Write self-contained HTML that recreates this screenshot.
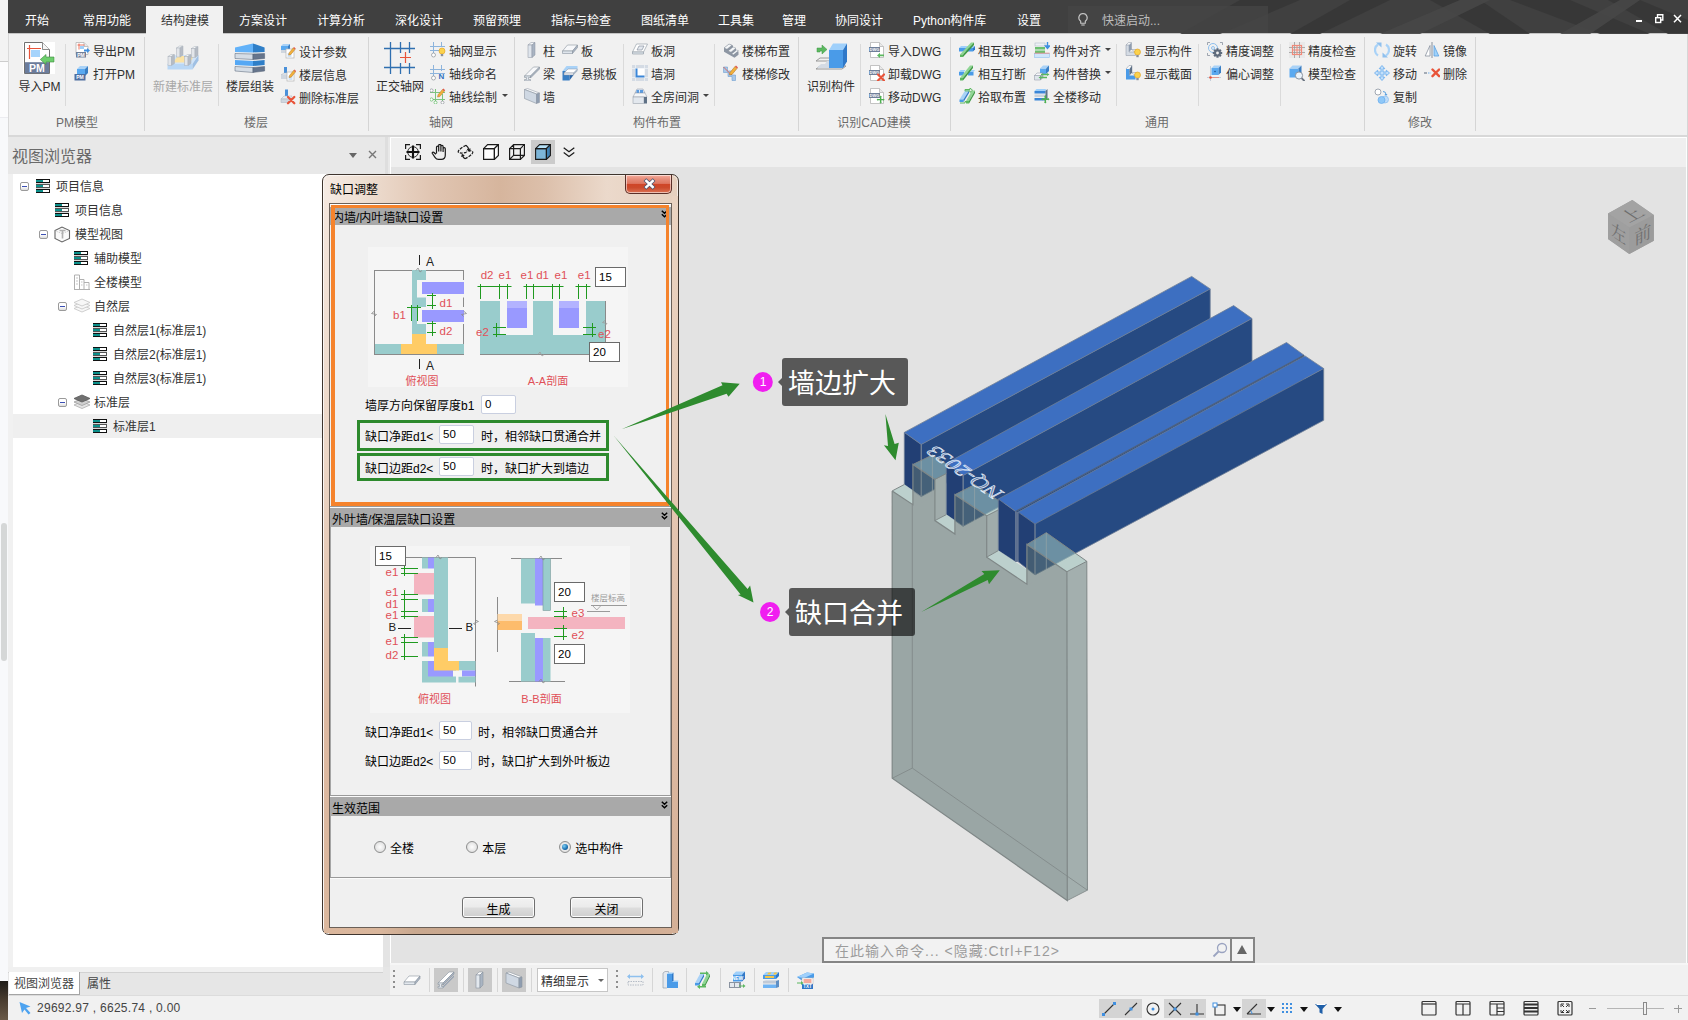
<!DOCTYPE html>
<html lang="zh-CN"><head><meta charset="utf-8"><title>缺口调整</title>
<style>
html,body{margin:0;padding:0}
body{width:1688px;height:1020px;overflow:hidden;position:relative;background:#f1f1f1;font:12px/16px "Liberation Sans","Noto Sans CJK SC",sans-serif;color:#2e2e2e}
div,span,svg{position:absolute;box-sizing:border-box}
.t{white-space:nowrap;height:16px;line-height:16px;margin-top:2px}
.tab{color:#fff;top:11px;font-size:12px}
.rl{color:#6a6a6a;top:113px;text-align:center}
.vs{width:1px;background:#d5d5d5}
.dd{width:0;height:0;border:3px solid transparent;border-top:3px solid #444;border-bottom:none}
.tr{height:24px;line-height:24px;white-space:nowrap;color:#333;margin-top:1px}
.ex{width:9px;height:9px;border:1px solid #9a9a9a;background:linear-gradient(#fff,#fff 50%,#dcdcdc);border-radius:2px}
.ex:after{content:"";position:absolute;left:1px;top:3px;width:5px;height:1px;background:#3c50b4}
.dt{font:12px/14px "Liberation Sans","Noto Sans CJK SC",sans-serif;color:#000;white-space:nowrap;height:14px}
.in{background:#fff;border:1px solid #c9cfe0;border-radius:2px;font:11.5px/17px "Liberation Sans","Noto Sans CJK SC",sans-serif;color:#000;padding-left:3px}
.sh{left:330px;width:341px;height:18px;overflow:hidden;background:#a9a9a9;font:12px/18px "Liberation Sans","Noto Sans CJK SC",sans-serif;color:#000;padding-left:2px;white-space:nowrap}
.btn{height:21px;border:1px solid #707070;border-radius:3px;background:linear-gradient(#f2f2f2 0%,#ebebeb 48%,#dddddd 52%,#cfcfcf 100%);padding-top:3px;font:12px/19px "Liberation Sans","Noto Sans CJK SC",sans-serif;color:#000;text-align:center;box-shadow:inset 0 0 0 1px #fcfcfc}
.rad{width:12px;height:12px;border-radius:50%;border:1px solid #8e8f8f;background:radial-gradient(circle at 50% 50%,#fdfdfd 0%,#e6e6e6 60%,#c9c9c9 100%)}
</style></head><body>
<div style="left:0;top:0;width:8px;height:1020px;background:#f8f9fb"></div><div style="left:0;top:0;width:8px;height:62px;background:#f3f3f3;border-bottom:1px solid #cdcdcd"></div><div style="left:0;top:62px;width:8px;height:56px;background:#fcfcfd;border-bottom:1px solid #ececf0"></div><div style="left:1px;top:523px;width:6px;height:138px;background:#d5d7d7;border-radius:3px"></div><div style="left:0;top:981px;width:8px;height:39px;background:linear-gradient(#1f1c19,#4a3d30 50%,#6a5a48)"></div><div style="left:8px;top:0;width:1680px;height:34px;background:#404040;border-bottom:1px solid #c4c4c4"></div><svg style="left:1180px;top:0" width="508" height="34" viewBox="0 0 508 34"><path d="M60 0L0 34H40L120 0zM170 0l-60 34h30l70-34zM250 0l60 34h40l-50-34zM330 0l90 34h50l-80-34zM460 0l48 20v14l-20 0-60-34z" fill="#363636" opacity=".9"/><path d="M200 34l80-34h30l-70 34zM380 34l60-34h20l-50 34z" fill="#474747" opacity=".9"/></svg><div style="left:1068px;top:6px;width:200px;height:27px;background:#454545;opacity:.8"></div><div style="left:146px;top:6px;width:77px;height:29px;background:#f1f1f1"></div><div class="t tab" style="left:25px;top:11px;">开始</div><div class="t tab" style="left:83px;top:11px;">常用功能</div><div class="t tab" style="left:161px;top:11px;color:#333">结构建模</div><div class="t tab" style="left:239px;top:11px;">方案设计</div><div class="t tab" style="left:317px;top:11px;">计算分析</div><div class="t tab" style="left:395px;top:11px;">深化设计</div><div class="t tab" style="left:473px;top:11px;">预留预埋</div><div class="t tab" style="left:551px;top:11px;">指标与检查</div><div class="t tab" style="left:641px;top:11px;">图纸清单</div><div class="t tab" style="left:718px;top:11px;">工具集</div><div class="t tab" style="left:782px;top:11px;">管理</div><div class="t tab" style="left:835px;top:11px;">协同设计</div><div class="t tab" style="left:913px;top:11px;">Python构件库</div><div class="t tab" style="left:1017px;top:11px;">设置</div><svg style="left:1076px;top:12px" width="14" height="16" viewBox="0 0 14 16"><path d="M7 1.500a4.200 4.200 0 0 1 2.300 7.700v2h-4.600v-2a4.200 4.200 0 0 1 2.300-7.700z" fill="none" stroke="#c8c8c8" stroke-width="1.100"/><path d="M5.300 13h3.400" stroke="#c8c8c8" stroke-width="1.100"/></svg><div class="t" style="left:1102px;top:11px;color:#bdbdbd">快速启动...</div><div style="left:1636px;top:19.500px;width:6px;height:2.500px;background:#fff"></div><svg style="left:1654px;top:13px" width="10" height="11" viewBox="0 0 10 11"><path d="M3.500 4v-2.300h5.300v5.300h-2.300" fill="none" stroke="#fff" stroke-width="1.400"/><rect x="1.700" y="4.700" width="5" height="4.800" fill="none" stroke="#fff" stroke-width="1.400"/></svg><svg style="left:1673px;top:14px" width="9" height="9" viewBox="0 0 9 9"><path d="M1 1l7 7.200M8 1l-7 7.200" stroke="#fff" stroke-width="1.500"/></svg><div style="left:8px;top:34px;width:1680px;height:101px;background:#f1f1f1"></div><div style="left:8px;top:135px;width:1680px;height:2px;background:#d8d8d8"></div><div style="left:8px;top:137px;width:1680px;height:1px;background:#f6f6f6"></div><div style="left:8px;top:34px;width:1px;height:101px;background:#d9d9d9"></div><div class="vs" style="left:144px;top:37px;height:94px"></div><div class="vs" style="left:368px;top:37px;height:94px"></div><div class="vs" style="left:514px;top:37px;height:94px"></div><div class="vs" style="left:798px;top:37px;height:94px"></div><div class="vs" style="left:950px;top:37px;height:94px"></div><div class="vs" style="left:1364px;top:37px;height:94px"></div><div class="vs" style="left:1475px;top:37px;height:94px"></div><div class="vs" style="left:65px;top:44px;height:62px;background:#dadada"></div><div class="vs" style="left:218px;top:44px;height:62px;background:#dadada"></div><div class="vs" style="left:623px;top:44px;height:62px;background:#dadada"></div><div class="vs" style="left:714px;top:44px;height:62px;background:#dadada"></div><div class="vs" style="left:860px;top:44px;height:62px;background:#dadada"></div><div class="vs" style="left:1116px;top:44px;height:62px;background:#dadada"></div><div class="vs" style="left:1198px;top:44px;height:62px;background:#dadada"></div><div class="vs" style="left:1280px;top:44px;height:62px;background:#dadada"></div><div class="t rl" style="left:27px;width:100px">PM模型</div><div class="t rl" style="left:206px;width:100px">楼层</div><div class="t rl" style="left:391px;width:100px">轴网</div><div class="t rl" style="left:607px;width:100px">构件布置</div><div class="t rl" style="left:824px;width:100px">识别CAD建模</div><div class="t rl" style="left:1107px;width:100px">通用</div><div class="t rl" style="left:1370px;width:100px">修改</div><svg style="left:23px;top:42px" width="32" height="32" viewBox="0 0 32 32"><rect x="0" y="0" width="32" height="32" fill="#fff"/><path d="M1.500 .5h18l7 7v24h-25z" fill="#fff" stroke="#707070" stroke-width="1"/><path d="M19.500 .5v7h7" fill="#f6f6f6" stroke="#8a8a8a" stroke-width="1"/><path d="M4 6.500h14M6.500 3v14" stroke="#e8543a" stroke-width="1.200"/><rect x="8" y="8" width="9" height="7" fill="#a6d4fc"/><rect x="2" y="20.200" width="24" height="11" fill="#6b7c9b"/><text x="13.800" y="29.500" font-size="10.500" font-weight="bold" font-family="Liberation Sans,sans-serif" fill="#fff" text-anchor="middle">PM</text><path d="M31 15h-8v-2.500l-5.700 5 5.700 5v-2.500h8z" fill="#6dce6d" stroke="#3f8a3f" stroke-width=".6"/></svg><div class="t" style="left:-0.5px;width:80px;text-align:center;top:77px;">导入PM</div><svg style="left:167px;top:44px" width="32" height="32" viewBox="0 0 32 32"><path d="M0.500 20l8-9h23l-6 9z" fill="#cfe3f8"/><path d="M6 18.500l5-6.500h16l-4 6.500z" fill="#fbe3a5"/><path d="M9.5 4l3-2h3l-3 2z" fill="#f4f6f8" stroke="#a9b0ba" stroke-width=".5"/><rect x="9.5" y="4" width="3.500" height="9" fill="#e3e6ea" stroke="#a9b0ba" stroke-width=".5"/><path d="M13.0 4l3-2v9l-3 2z" fill="#b5bbc4" stroke="#a9b0ba" stroke-width=".5"/><path d="M24.5 4.5l3-2h3l-3 2z" fill="#f4f6f8" stroke="#a9b0ba" stroke-width=".5"/><rect x="24.5" y="4.5" width="3.500" height="9" fill="#e3e6ea" stroke="#a9b0ba" stroke-width=".5"/><path d="M28.0 4.5l3-2v9l-3 2z" fill="#b5bbc4" stroke="#a9b0ba" stroke-width=".5"/><path d="M0.500 20h25v5.500h-25z" fill="#b9d7f5"/><path d="M25.500 20l6-9v5.500l-6 9z" fill="#9fc0e4"/><path d="M1 12.5l3-2h3l-3 2z" fill="#f4f6f8" stroke="#a9b0ba" stroke-width=".5"/><rect x="1" y="12.5" width="3.500" height="9" fill="#e3e6ea" stroke="#a9b0ba" stroke-width=".5"/><path d="M4.5 12.5l3-2v9l-3 2z" fill="#b5bbc4" stroke="#a9b0ba" stroke-width=".5"/><path d="M17.5 12.5l3-2h3l-3 2z" fill="#f4f6f8" stroke="#a9b0ba" stroke-width=".5"/><rect x="17.5" y="12.5" width="3.500" height="9" fill="#e3e6ea" stroke="#a9b0ba" stroke-width=".5"/><path d="M21.0 12.5l3-2v9l-3 2z" fill="#b5bbc4" stroke="#a9b0ba" stroke-width=".5"/></svg><div class="t" style="left:143px;width:80px;text-align:center;top:77px;color:#a8a8a8">新建标准层</div><svg style="left:234px;top:43px" width="32" height="32" viewBox="0 0 32 32"><path d="M1 4.500L19 .5V9.500L1 9z" fill="#62b2f9"/><path d="M19 .5L30.600 4.500V9L19 9.500z" fill="#2f7fc8"/><path d="M1 10.500L19 11V16.500L1 15.500z" fill="#d5dde6" stroke="#4f5d70" stroke-width=".5"/><path d="M19 11L30.600 10.500V15.500L19 16.500z" fill="#66758c" stroke="#4f5d70" stroke-width=".5"/><path d="M1 17L19 18V23L1 22z" fill="#55a8f5"/><path d="M19 18L30.600 17V22L19 23z" fill="#2f7fc8"/><path d="M1 23.500L19 24.500V29.500L1 28z" fill="#d5dde6" stroke="#4f5d70" stroke-width=".5"/><path d="M19 24.500L30.600 23.500V28L19 29.500z" fill="#66758c" stroke="#4f5d70" stroke-width=".5"/></svg><div class="t" style="left:210px;width:80px;text-align:center;top:77px;">楼层组装</div><svg style="left:383px;top:42px" width="32" height="32" viewBox="0 0 32 32"><path d="M1 6.500h32M1 25.500h32M7.500 0v32M17.500 0v11M17.500 21v11M26.500 0v11M26.500 21v11" stroke="#2f6fb0" stroke-width="1.300"/><path d="M17 15.500h11M22.500 10v11" stroke="#e8543a" stroke-width="1.200"/></svg><div class="t" style="left:360px;width:80px;text-align:center;top:77px;">正交轴网</div><svg style="left:815px;top:43px" width="32" height="32" viewBox="0 0 32 32"><path d="M1 18l4-3h26l-4 3zM1 26l4-3h26l-4 3z" fill="none" stroke="#9a9a9a" stroke-width="1"/><path d="M2 25l4-4h4l2-3h6l-3 7z" fill="#d4dbe4"/><path d="M14 7l4-6.500h14l-4 6.500z" fill="#9fd0fb"/><rect x="14" y="7" width="14" height="18" fill="#4a9be8"/><path d="M28 7l4-6.500v18l-4 6.500z" fill="#2f78c8"/><path d="M2 9v-4h5v-3l5 4.500-5 4.500v-3h-2v1z" fill="#5cb860" stroke="#3f9a45" stroke-width=".5"/></svg><div class="t" style="left:791px;width:80px;text-align:center;top:77px;">识别构件</div><svg style="left:74px;top:42px" width="16" height="16" viewBox="0 0 16 16"><path d="M2 0.5h8l4 4v8h-12z" fill="#fff" stroke="#b5b5b5" stroke-width=".8"/><path d="M10 0.5v4h4" fill="#e9e9e9" stroke="#b5b5b5" stroke-width=".8"/><path d="M3.5 3h7M5 1.5v6" stroke="#e8543a" stroke-width=".8"/><rect x="6" y="4" width="4" height="3" fill="#9fd0fb"/><rect x="2" y="10" width="10" height="5.5" fill="#6f7f99"/><text x="7" y="14.6" font-size="5" font-weight="bold" font-family="Liberation Sans,sans-serif" fill="#fff" text-anchor="middle">PM</text><path d="M10 7.5h3v-1.5l3 2.5-3 2.5v-1.5h-3z" fill="#3f8fe0"/></svg><div class="t" style="left:93px;top:42px;">导出PM</div><svg style="left:74px;top:65px" width="16" height="16" viewBox="0 0 16 16"><path d="M3 4h8v7h-8z" fill="#5aa9f0"/><path d="M3 4l3 -3h8l-3 3z" fill="#a9d2f7"/><path d="M11 4l3 -3v7l-3 3z" fill="#3a7fc4"/><rect x="0.5" y="9" width="11" height="6.5" fill="#4f6f9f"/><text x="6" y="14.4" font-size="5" font-weight="bold" font-family="Liberation Sans,sans-serif" fill="#fff" text-anchor="middle">PM</text></svg><div class="t" style="left:93px;top:65px;">打开PM</div><svg style="left:280px;top:43px" width="16" height="16" viewBox="0 0 16 16"><path d="M1 3h7v5h-7z" fill="#5aa9f0"/><path d="M1 3l2 -2h7l-2 2z" fill="#a9d2f7"/><path d="M8 3l2 -2v5l-2 2z" fill="#3a7fc4"/><rect x="1" y="7" width="8" height="3" fill="#cfd6df"/><rect x="6" y="6" width="8" height="9" fill="#fff" stroke="#b5b5b5" stroke-width=".7"/><path d="M7.5 11h4M7.5 13h4" stroke="#9fc6ee" stroke-width="1"/><g transform="translate(9,4) scale(0.85)"><path d="M0 7 L5 1 L7 3 L2 9 L-0.5 9.5Z" fill="#f2b13c" stroke="#a86a1c" stroke-width=".5"/><path d="M5 1 L6 0 L8 2 L7 3Z" fill="#e0564a"/></g></svg><div class="t" style="left:299px;top:43px;">设计参数</div><svg style="left:280px;top:66px" width="16" height="16" viewBox="0 0 16 16"><rect x="4" y="1" width="3" height="7" fill="#4a90d9"/><path d="M1 9l3-2h7l-3 2z" fill="#e8edf2" stroke="#aab2bd" stroke-width=".5"/><rect x="1" y="9" width="7" height="4" fill="#cfd6df"/><rect x="7" y="6" width="7" height="9" fill="#fff" stroke="#b5b5b5" stroke-width=".7"/><path d="M8.5 11h4M8.5 13h4" stroke="#9fc6ee" stroke-width="1"/><g transform="translate(9.5,3.5) scale(0.85)"><path d="M0 7 L5 1 L7 3 L2 9 L-0.5 9.5Z" fill="#f2b13c" stroke="#a86a1c" stroke-width=".5"/><path d="M5 1 L6 0 L8 2 L7 3Z" fill="#e0564a"/></g></svg><div class="t" style="left:299px;top:66px;">楼层信息</div><svg style="left:280px;top:89px" width="16" height="16" viewBox="0 0 16 16"><rect x="5" y="0.5" width="3" height="7" fill="#4a90d9"/><path d="M1 10l3-3h8l-2 3z" fill="#e8edf2" stroke="#aab2bd" stroke-width=".5"/><rect x="1" y="10" width="9" height="3.5" fill="#cfd6df" stroke="#aab2bd" stroke-width=".5"/><g transform="translate(8,8) scale(1.05)" stroke="#e8543a" stroke-width="2.2" stroke-linecap="round"><path d="M0 0L6 6M6 0L0 6"/></g></svg><div class="t" style="left:299px;top:89px;">删除标准层</div><svg style="left:430px;top:42px" width="16" height="16" viewBox="0 0 16 16"><path d="M0 4.5h15M0 8.5h9M3.5 0v11M11.5 0v5" stroke="#8db4dc" stroke-width="1"/><circle cx="3.5" cy="13" r="2" fill="#fff" stroke="#8a8f98" stroke-width=".7"/><g transform="translate(9,6)"><circle cx="3" cy="3" r="3" fill="#fbd24c" stroke="#e0a020" stroke-width=".6"/><rect x="1.8" y="6" width="2.4" height="2.2" fill="#8a8f98"/></g></svg><div class="t" style="left:449px;top:42px;">轴网显示</div><svg style="left:430px;top:65px" width="16" height="16" viewBox="0 0 16 16"><path d="M0 4.5h15M0 8.5h15M3.5 0v11M11.5 0v6" stroke="#8db4dc" stroke-width="1"/><circle cx="3.5" cy="13" r="2" fill="#fff" stroke="#8a8f98" stroke-width=".7"/><text x="11.5" y="14" font-size="8" font-weight="bold" font-family="Liberation Sans,sans-serif" fill="#2f6fc0" text-anchor="middle">N</text></svg><div class="t" style="left:449px;top:65px;">轴线命名</div><svg style="left:430px;top:88px" width="16" height="16" viewBox="0 0 16 16"><path d="M0 4.5h15M0 11.5h15M5.5 1v13M12.5 6v8" stroke="#7cc47f" stroke-width="1"/><circle cx="1.5" cy="2.5" r="1.6" fill="#fff" stroke="#8a8f98" stroke-width=".7"/><circle cx="1.5" cy="11.5" r="1.6" fill="#fff" stroke="#5cb860" stroke-width=".7"/><circle cx="5.5" cy="14.5" r="1.5" fill="#fff" stroke="#5cb860" stroke-width=".7"/><circle cx="12.5" cy="14.5" r="1.5" fill="#fff" stroke="#8a8f98" stroke-width=".7"/><g transform="translate(8,0.5) scale(0.9)"><path d="M0 7 L5 1 L7 3 L2 9 L-0.5 9.5Z" fill="#f2b13c" stroke="#a86a1c" stroke-width=".5"/><path d="M5 1 L6 0 L8 2 L7 3Z" fill="#e0564a"/></g></svg><div class="t" style="left:449px;top:88px;">轴线绘制</div><svg style="left:524px;top:42px" width="16" height="16" viewBox="0 0 16 16"><path d="M4 3l3-2.5h4l-3 2.5z" fill="#f4f6f8" stroke="#8a93a0" stroke-width=".5"/><rect x="4" y="3" width="4" height="12.5" fill="#dfe5ec" stroke="#8a93a0" stroke-width=".5"/><path d="M8 3l3-2.5v12.5l-3 2.5z" fill="#a9b4c2" stroke="#8a93a0" stroke-width=".5"/></svg><div class="t" style="left:543px;top:42px;">柱</div><svg style="left:524px;top:65px" width="16" height="16" viewBox="0 0 16 16"><path d="M0.5 11l9-9h6l-9 9z" fill="#f7f8fa" stroke="#8a93a0" stroke-width=".6"/><path d="M0.5 11h6v1.5h-2v2h2v1.3h-6v-1.3h2v-2h-2z" fill="#dfe5ec" stroke="#8a93a0" stroke-width=".6"/><path d="M6.5 11l9-9v2l-9 9z" fill="#a9b4c2" stroke="#8a93a0" stroke-width=".6"/></svg><div class="t" style="left:543px;top:65px;">梁</div><svg style="left:524px;top:88px" width="16" height="16" viewBox="0 0 16 16"><path d="M0.5 1.500l3-1l12 4.500l-3 1z" fill="#f4f6f8" stroke="#8a93a0" stroke-width=".5"/><path d="M0.5 1.500l12 4.500v9.500l-12-5z" fill="#cfd8e3" stroke="#8a93a0" stroke-width=".6"/><path d="M12.5 6l3-1v9.500l-3 1z" fill="#8f9db0" stroke="#8a93a0" stroke-width=".5"/></svg><div class="t" style="left:543px;top:88px;">墙</div><svg style="left:562px;top:42px" width="16" height="16" viewBox="0 0 16 16"><path d="M0.5 9l5-6h10l-5 6z" fill="#f7f8fa" stroke="#8a93a0" stroke-width=".6"/><path d="M0.5 9h10v2.5h-10z" fill="#dfe5ec" stroke="#8a93a0" stroke-width=".6"/><path d="M10.5 9l5-6v2.5l-5 6z" fill="#a9b4c2" stroke="#8a93a0" stroke-width=".6"/></svg><div class="t" style="left:581px;top:42px;">板</div><svg style="left:562px;top:65px" width="16" height="16" viewBox="0 0 16 16"><path d="M0.5 6l4-5h11v4l-4 5z" fill="#a9d2f7"/><path d="M0.5 6h7v9.5h-7z" fill="#3a7fc4"/><path d="M7.5 10l4-5v5l-4 5.5z" fill="#2b66a8"/><path d="M2 8l4-4h9.5l-4 4z" fill="#fff" stroke="#8a93a0" stroke-width=".5"/><path d="M2 8h9.500v2h-9.5z" fill="#eef1f5" stroke="#8a93a0" stroke-width=".5"/><path d="M11.5 8l4-4v2l-4 4z" fill="#a9b4c2"/></svg><div class="t" style="left:581px;top:65px;">悬挑板</div><svg style="left:632px;top:42px" width="16" height="16" viewBox="0 0 16 16"><path d="M0.5 10l4-8h11l-4 8z" fill="#fff" stroke="#8a93a0" stroke-width=".6"/><path d="M0.5 10h11v2h-11z" fill="#dfe5ec" stroke="#8a93a0" stroke-width=".6"/><path d="M5 8l2-4h5l-2 4z" fill="#e3e8ee" stroke="#8a93a0" stroke-width=".7"/></svg><div class="t" style="left:651px;top:42px;">板洞</div><svg style="left:632px;top:65px" width="16" height="16" viewBox="0 0 16 16"><rect x="0" y="0" width="16" height="16" fill="#d4dbe4"/><path d="M0 3.500h16M0 12.500h16M3.500 0v16M12.500 0v16" stroke="#eef1f5" stroke-width=".8"/><rect x="3.500" y="3.500" width="9" height="9" fill="#fff"/><path d="M3.500 3.500h2v7h7v2h-9z" fill="#3a86d8"/></svg><div class="t" style="left:651px;top:65px;">墙洞</div><svg style="left:632px;top:88px" width="16" height="16" viewBox="0 0 16 16"><path d="M3 5l2-4h6l2 4z" fill="#dbe8f6" stroke="#8a93a0" stroke-width=".5"/><path d="M4.500 2h2.500v3h-2.500zM8 2h3v5h-3z" fill="#5a9be0"/><path d="M1 9l2-4h10l2 4z" fill="#f4f6f8" stroke="#8a93a0" stroke-width=".5"/><rect x="1" y="9" width="11" height="6.500" fill="#e3e8ee" stroke="#8a93a0" stroke-width=".5"/><path d="M12 9l3 0v6.500h-3z" fill="#5f7186"/></svg><div class="t" style="left:651px;top:88px;">全房间洞</div><svg style="left:723px;top:42px" width="16" height="16" viewBox="0 0 16 16"><path d="M1 6l5-4 4 1.500v2l3 1.200v2l2.500 1v3l-4 3l-10.500-6z" fill="#8d96a3"/><path d="M1 6l5-4l3 1.200l-5 4zM5 9l5-4l3 1.200l-5 4zM8.500 12l5-4l2 .8l-5 4z" fill="#f4f6f8" stroke="#6d7683" stroke-width=".4"/></svg><div class="t" style="left:742px;top:42px;">楼梯布置</div><svg style="left:723px;top:65px" width="16" height="16" viewBox="0 0 16 16"><path d="M0.500 2h4v4h4v4h4v5.500h-3.500v-4h-4v-4h-4.500z" fill="#a9c8ea" stroke="#6f9fd0" stroke-width=".6"/><path d="M0.500 2l8 8" stroke="#e8543a" stroke-width=".8"/><g transform="translate(7,0.5) scale(1)"><path d="M0 7 L5 1 L7 3 L2 9 L-0.5 9.5Z" fill="#f2b13c" stroke="#a86a1c" stroke-width=".5"/><path d="M5 1 L6 0 L8 2 L7 3Z" fill="#e0564a"/></g></svg><div class="t" style="left:742px;top:65px;">楼梯修改</div><svg style="left:869px;top:42px" width="16" height="16" viewBox="0 0 16 16"><path d="M1.5 0.5h9l4 4v11h-13z" fill="#fff" stroke="#b5b5b5" stroke-width=".8"/><path d="M10.5 0.5v4h4" fill="#e9e9e9" stroke="#b5b5b5" stroke-width=".8"/><rect x="0" y="5" width="11" height="5" fill="#6f7f99"/><text x="5.5" y="9" font-size="4" font-family="Liberation Sans,sans-serif" font-weight="bold" fill="#fff" text-anchor="middle">DWG</text><path d="M15 12.500h-4v-1.800l-3 2.800 3 2.500v-1.800h4z" fill="#5cb860"/></svg><div class="t" style="left:888px;top:42px;">导入DWG</div><svg style="left:869px;top:65px" width="16" height="16" viewBox="0 0 16 16"><path d="M1.5 0.5h9l4 4v11h-13z" fill="#fff" stroke="#b5b5b5" stroke-width=".8"/><path d="M10.5 0.5v4h4" fill="#e9e9e9" stroke="#b5b5b5" stroke-width=".8"/><rect x="0" y="5" width="11" height="5" fill="#6f7f99"/><text x="5.5" y="9" font-size="4" font-family="Liberation Sans,sans-serif" font-weight="bold" fill="#fff" text-anchor="middle">DWG</text><g transform="translate(9,9.5) scale(1)" stroke="#e8543a" stroke-width="2.2" stroke-linecap="round"><path d="M0 0L6 6M6 0L0 6"/></g></svg><div class="t" style="left:888px;top:65px;">卸载DWG</div><svg style="left:869px;top:88px" width="16" height="16" viewBox="0 0 16 16"><path d="M1.5 0.5h9l4 4v11h-13z" fill="#fff" stroke="#b5b5b5" stroke-width=".8"/><path d="M10.5 0.5v4h4" fill="#e9e9e9" stroke="#b5b5b5" stroke-width=".8"/><rect x="0" y="5" width="11" height="5" fill="#6f7f99"/><text x="5.5" y="9" font-size="4" font-family="Liberation Sans,sans-serif" font-weight="bold" fill="#fff" text-anchor="middle">DWG</text><g transform="translate(8.5,8.5) scale(0.9)" stroke="#4caf50" stroke-width="1.6" fill="#4caf50"><path d="M3.5 0V7M0 3.5H7"/><path d="M3.5 -1l1.3 1.6h-2.6z M3.5 8l1.3-1.6h-2.6z M-1 3.5l1.6 -1.3v2.6z M8 3.5l-1.6-1.3v2.6z" stroke="none"/></g></svg><div class="t" style="left:888px;top:88px;">移动DWG</div><svg style="left:959px;top:42px" width="16" height="16" viewBox="0 0 16 16"><path d="M0 6l2-2h14l-2 2z" fill="#9fd0fb"/><rect x="0" y="6" width="14" height="3.500" fill="#4a9be8"/><path d="M14 6l2-2v3.500l-2 2z" fill="#2f78c8"/><path d="M1 12.5L12 0.5l3 0L4 12.5z" fill="#8fd694"/><path d="M1 12.5v2.500h3v-2.500z" fill="#5cb860"/><path d="M4 12.5L15 0.5v2.500L4 15.0z" fill="#3f9a45"/></svg><div class="t" style="left:978px;top:42px;">相互裁切</div><svg style="left:959px;top:65px" width="16" height="16" viewBox="0 0 16 16"><path d="M0 7l1.500-2h5l-1.500 2zM9 7l1.500-2h5.500l-1.500 2z" fill="#9fd0fb"/><path d="M0 7h5v3.500h-5zM9 7h5.500v3.500h-5.500z" fill="#4a9be8"/><path d="M1 13L11 0.5l3 0L4 13z" fill="#8fd694"/><path d="M1 13v2.500h3v-2.500z" fill="#5cb860"/><path d="M4 13L14 0.5v2.500L4 15.5z" fill="#3f9a45"/></svg><div class="t" style="left:978px;top:65px;">相互打断</div><svg style="left:959px;top:88px" width="16" height="16" viewBox="0 0 16 16"><path d="M0.5 11.5L6 2.5l4 0L4.5 11.5z" fill="#a9d2f7"/><path d="M0.5 11.5v2.500h4v-2.500z" fill="#4a9be8"/><path d="M4.5 11.5L10 2.5v2.500L4.5 14.0z" fill="#2f78c8"/><path d="M7 13L13 2.5l3 0L10 13z" fill="#8fd694"/><path d="M7 13v2.500h3v-2.500z" fill="#5cb860"/><path d="M10 13L16 2.5v2.500L10 15.5z" fill="#3f9a45"/><path d="M6 1.500h5v-1.500l2.500 2.200-2.500 2.200v-1.500h-5zM1 15h5v-1.500h3" fill="none" stroke="#5cb860" stroke-width="1"/></svg><div class="t" style="left:978px;top:88px;">拾取布置</div><svg style="left:1034px;top:42px" width="16" height="16" viewBox="0 0 16 16"><rect x="1" y="1" width="10" height="3" fill="#eef1f5" stroke="#a9b4c2" stroke-width=".5"/><rect x="1" y="5" width="10" height="2.500" fill="#6cc070"/><rect x="1" y="8.500" width="10" height="2.500" fill="#6cc070"/><path d="M13.500 0v5M11.500 4l2 2.500 2-2.500z" stroke="#3f8fe0" stroke-width="1.400" fill="#3f8fe0"/><rect x="0.500" y="11.500" width="15" height="4" fill="#cfe6fb" stroke="#8fc0ee" stroke-width=".6"/><path d="M0.500 11.200h15" stroke="#e8877a" stroke-width=".8"/></svg><div class="t" style="left:1053px;top:42px;">构件对齐</div><svg style="left:1034px;top:65px" width="16" height="16" viewBox="0 0 16 16"><path d="M6 3.5h6v5.5h-6z" fill="#5aa9f0"/><path d="M6 3.5l3 -3h6l-3 3z" fill="#a9d2f7"/><path d="M12 3.5l3 -3v5.5l-3 3z" fill="#3a7fc4"/><path d="M0.5 10.5h6v4.5h-6z" fill="#dfe5ec" stroke="#8a93a0" stroke-width=".5"/><path d="M0.5 10.5l2.5 -2.5h6l-2.5 2.5z" fill="#f7f8fa" stroke="#8a93a0" stroke-width=".5"/><path d="M6.5 10.5l2.5 -2.5v4.5l-2.5 2.5z" fill="#a9b4c2" stroke="#8a93a0" stroke-width=".5"/><path d="M7 9.500h6M7 12.500h6" stroke="#5cb860" stroke-width="1.500"/><path d="M13 8l2.500 1.500-2.500 1.500zM7 11l-2.500 1.500 2.500 1.500z" fill="#5cb860"/></svg><div class="t" style="left:1053px;top:65px;">构件替换</div><svg style="left:1034px;top:88px" width="16" height="16" viewBox="0 0 16 16"><path d="M0.500 3l2-2h9l2 2z" fill="#9fd0fb"/><rect x="0.500" y="3" width="11" height="2.500" fill="#3a86d8"/><rect x="0.500" y="6.500" width="11" height="2.500" fill="#c9d2dd"/><rect x="0.500" y="10" width="11" height="2.500" fill="#3a86d8"/><path d="M11.500 3l2-2v9.500l-2 2z" fill="#5f7186"/><g transform="translate(8,8) scale(0.95)" stroke="#4caf50" stroke-width="1.6" fill="#4caf50"><path d="M3.5 0V7M0 3.5H7"/><path d="M3.5 -1l1.3 1.6h-2.6z M3.5 8l1.3-1.6h-2.6z M-1 3.5l1.6 -1.3v2.6z M8 3.5l-1.6-1.3v2.6z" stroke="none"/></g></svg><div class="t" style="left:1053px;top:88px;">全楼移动</div><svg style="left:1125px;top:42px" width="16" height="16" viewBox="0 0 16 16"><path d="M1 3l2.500-2.500h3l0 7h6.500l-2.500 3z" fill="#f4f6f8" stroke="#8a93a0" stroke-width=".5"/><path d="M1 3h3v7h6.500v3.500h-9.500z" fill="#d4dbe4" stroke="#8a93a0" stroke-width=".5"/><path d="M4 3l2.500-2.500v7l-2.500 2.500z" fill="#8f9db0"/><g transform="translate(9.5,7)"><circle cx="3" cy="3" r="3" fill="#fbd24c" stroke="#e0a020" stroke-width=".6"/><rect x="1.8" y="6" width="2.4" height="2.2" fill="#8a8f98"/></g></svg><div class="t" style="left:1144px;top:42px;">显示构件</div><svg style="left:1125px;top:65px" width="16" height="16" viewBox="0 0 16 16"><path d="M1 4l3-3.500h3v7h6l-2.500 3z" fill="#f4f6f8" stroke="#8a93a0" stroke-width=".5"/><path d="M1 4h3.500v6.500h6v4h-9.500z" fill="#4a9be8"/><path d="M4.500 4l2.500-3.500v7l-2.500 3z" fill="#5f7186"/><g transform="translate(9.5,7)"><circle cx="3" cy="3" r="3" fill="#fbd24c" stroke="#e0a020" stroke-width=".6"/><rect x="1.8" y="6" width="2.4" height="2.2" fill="#8a8f98"/></g></svg><div class="t" style="left:1144px;top:65px;">显示截面</div><svg style="left:1207px;top:42px" width="16" height="16" viewBox="0 0 16 16"><path d="M0.500 3v-2.500h2.500M13 0.500h2.500v2.500M0.500 11v2.500h2.500" stroke="#8a93a0" stroke-width=".8" fill="none"/><circle cx="6" cy="6" r="4.500" fill="none" stroke="#8fc0ee" stroke-width="1"/><circle cx="6" cy="6" r="1.500" fill="none" stroke="#8fc0ee" stroke-width="1"/><g fill="#5f6b7c"><rect x="9.4" y="6.3" width="2.200" height="2.600" transform="rotate(0 10.5 11)"/><rect x="9.4" y="6.3" width="2.200" height="2.600" transform="rotate(45 10.5 11)"/><rect x="9.4" y="6.3" width="2.200" height="2.600" transform="rotate(90 10.5 11)"/><rect x="9.4" y="6.3" width="2.200" height="2.600" transform="rotate(135 10.5 11)"/><rect x="9.4" y="6.3" width="2.200" height="2.600" transform="rotate(180 10.5 11)"/><rect x="9.4" y="6.3" width="2.200" height="2.600" transform="rotate(225 10.5 11)"/><rect x="9.4" y="6.3" width="2.200" height="2.600" transform="rotate(270 10.5 11)"/><rect x="9.4" y="6.3" width="2.200" height="2.600" transform="rotate(315 10.5 11)"/><circle cx="10.5" cy="11" r="3.4"/></g><circle cx="10.5" cy="11" r="1.428" fill="#f1f1f1"/></svg><div class="t" style="left:1226px;top:42px;">精度调整</div><svg style="left:1207px;top:65px" width="16" height="16" viewBox="0 0 16 16"><path d="M4.5 3.0h7v7h-7z" fill="#5aa9f0"/><path d="M4.5 3.0l2.5 -2.5h7l-2.5 2.5z" fill="#a9d2f7"/><path d="M11.5 3.0l2.5 -2.5v7l-2.5 2.5z" fill="#3a7fc4"/><circle cx="8" cy="6.500" r=".8" fill="#1f4f8f"/><path d="M3.500 1v15M0 12.500h14" stroke="#b9c6d6" stroke-width=".8"/><path d="M4 12.500h8" stroke="#e8877a" stroke-width=".8"/><circle cx="3.500" cy="12.500" r="1.300" fill="#e8543a"/></svg><div class="t" style="left:1226px;top:65px;">偏心调整</div><svg style="left:1289px;top:42px" width="16" height="16" viewBox="0 0 16 16"><rect x="0" y="0" width="16" height="16" fill="#e9e9e9"/><path d="M0 5.500h16M0 10.500h16M5.500 0v16M10.500 0v16" stroke="#9a9a9a" stroke-width=".8"/><rect x="3.500" y="3.500" width="9" height="9" fill="none" stroke="#f08a7a" stroke-width="1.200"/><path d="M8 3.500v9M3.500 8h9" stroke="#f08a7a" stroke-width="1"/></svg><div class="t" style="left:1308px;top:42px;">精度检查</div><svg style="left:1289px;top:65px" width="16" height="16" viewBox="0 0 16 16"><path d="M0.5 3.5h9v9h-9z" fill="#5aa9f0"/><path d="M0.5 3.5l3 -3h9l-3 3z" fill="#a9d2f7"/><path d="M9.5 3.5l3 -3v9l-3 3z" fill="#3a7fc4"/><circle cx="10" cy="10.500" r="3.600" fill="#eaf3fb" stroke="#8a93a0" stroke-width="1"/><path d="M12.600 13.200l3 3" stroke="#6d7683" stroke-width="1.800"/></svg><div class="t" style="left:1308px;top:65px;">模型检查</div><svg style="left:1374px;top:42px" width="16" height="16" viewBox="0 0 16 16"><path d="M4 13.500a6.500 6.500 0 0 1 0-11" fill="none" stroke="#a9d2f7" stroke-width="2.200"/><path d="M2 0.500h5.500v5z" fill="#8fc0ee"/><path d="M12 2.500a6.500 6.500 0 0 1 0 11" fill="none" stroke="#a9d2f7" stroke-width="2.200"/><path d="M14 15.500h-5.500v-5z" fill="#8fc0ee"/></svg><div class="t" style="left:1393px;top:42px;">旋转</div><svg style="left:1374px;top:65px" width="16" height="16" viewBox="0 0 16 16"><path d="M8 .5l2.800 3.200h-1.800v3.300h3.300v-1.800l3.200 2.800-3.200 2.800v-1.800h-3.300v3.300h1.800l-2.800 3.200-2.800-3.200h1.800v-3.300h-3.300v1.800l-3.200-2.800 3.200-2.800v1.800h3.300v-3.300h-1.800z" fill="#c4e0fa" stroke="#6fb0ee" stroke-width=".9"/></svg><div class="t" style="left:1393px;top:65px;">移动</div><svg style="left:1374px;top:88px" width="16" height="16" viewBox="0 0 16 16"><circle cx="4" cy="4" r="3" fill="#fff" stroke="#8a93a0" stroke-width=".8"/><circle cx="11" cy="11.500" r="3.500" fill="#bfdcf8" stroke="#8fc0ee" stroke-width=".8"/><circle cx="7.500" cy="12" r="3.500" fill="#8fc8f8" stroke="#6fb0ee" stroke-width=".8"/><path d="M9 3.500q3 0 3 3" fill="none" stroke="#5aa0e0" stroke-width="1"/><path d="M10.500 6h3l-1.500 2z" fill="#5aa0e0"/></svg><div class="t" style="left:1393px;top:88px;">复制</div><svg style="left:1424px;top:42px" width="16" height="16" viewBox="0 0 16 16"><path d="M8 0v16" stroke="#7d8692" stroke-width=".9"/><path d="M6 3.500v10.500h-4.800z" fill="#fff" stroke="#8a93a0" stroke-width=".8"/><path d="M10 3.500v10.500h4.800z" fill="#9fd2fa" stroke="#5aa0e0" stroke-width=".8"/></svg><div class="t" style="left:1443px;top:42px;">镜像</div><svg style="left:1424px;top:65px" width="16" height="16" viewBox="0 0 16 16"><path d="M0 8h3" stroke="#8a93a0" stroke-width="1.500"/><path d="M4 8h3" stroke="#6fb0ee" stroke-width="1.200" stroke-dasharray="1.500 1"/><g transform="translate(8.5,4.5) scale(1.1)" stroke="#e8543a" stroke-width="2.2" stroke-linecap="round"><path d="M0 0L6 6M6 0L0 6"/></g></svg><div class="t" style="left:1443px;top:65px;">删除</div><div class="dd" style="left:502px;top:94px"></div><div class="dd" style="left:703px;top:94px"></div><div class="dd" style="left:1105px;top:48px"></div><div class="dd" style="left:1105px;top:71px"></div><div style="left:8px;top:137px;width:377px;height:37px;background:#e8e8e8"></div><div style="left:385px;top:137px;width:3px;height:37px;background:#dedede"></div><div style="left:383px;top:174px;width:7px;height:798px;background:#e4e4e4"></div><div style="left:388px;top:137px;width:2px;height:37px;background:#e8e8e8"></div><div style="left:8px;top:174px;width:5px;height:796px;background:#f1f1f1"></div><div style="left:13px;top:174px;width:370px;height:793px;background:#fff"></div><div class="t" style="left:12px;top:143px;font-size:16px;height:24px;line-height:24px;color:#6a6a6a">视图浏览器</div><div class="dd" style="left:349px;top:153px;border-width:4px;border-top:5px solid #666;border-bottom:none"></div><svg style="left:368px;top:150px" width="9" height="9" viewBox="0 0 9 9"><path d="M1 1l7 7M8 1l-7 7" stroke="#777" stroke-width="1.400"/></svg><div style="left:13px;top:414px;width:310px;height:24px;background:#efefef"></div><div class="ex" style="left:20px;top:182px"></div><svg style="left:36px;top:179px" width="14" height="14" viewBox="0 0 14 14"><rect x="0" y="0" width="14" height="4" fill="#111"/><rect x="0" y="1" width="7" height="2" fill="#0d8f8a"/><rect x="7" y="1" width="6" height="2" fill="#fff"/><rect x="0" y="5" width="14" height="4" fill="#555"/><rect x="0" y="6" width="7" height="2" fill="#0d8f8a"/><rect x="7" y="6" width="6" height="2" fill="#fff"/><rect x="0" y="10" width="14" height="4" fill="#111"/><rect x="0" y="11" width="7" height="2" fill="#0d8f8a"/><rect x="7" y="11" width="6" height="2" fill="#fff"/><rect x="0" y="4" width="14" height="1" fill="#d8d8d8"/><rect x="0" y="9" width="14" height="1" fill="#d8d8d8"/></svg><div class="tr" style="left:56px;top:174px">项目信息</div><svg style="left:55px;top:203px" width="14" height="14" viewBox="0 0 14 14"><rect x="0" y="0" width="14" height="4" fill="#111"/><rect x="0" y="1" width="7" height="2" fill="#0d8f8a"/><rect x="7" y="1" width="6" height="2" fill="#fff"/><rect x="0" y="5" width="14" height="4" fill="#555"/><rect x="0" y="6" width="7" height="2" fill="#0d8f8a"/><rect x="7" y="6" width="6" height="2" fill="#fff"/><rect x="0" y="10" width="14" height="4" fill="#111"/><rect x="0" y="11" width="7" height="2" fill="#0d8f8a"/><rect x="7" y="11" width="6" height="2" fill="#fff"/><rect x="0" y="4" width="14" height="1" fill="#d8d8d8"/><rect x="0" y="9" width="14" height="1" fill="#d8d8d8"/></svg><div class="tr" style="left:75px;top:198px">项目信息</div><div class="ex" style="left:39px;top:230px"></div><svg style="left:54px;top:226px" width="17" height="17" viewBox="0 0 17 17"><path d="M1 4.500l7-3.500 7.500 3.500v8l-7.500 3.500-7-3.500z" fill="#fafafa" stroke="#666" stroke-width="1.100"/><path d="M1.500 5l6.500 2.500 7-2.500" fill="none" stroke="#b5b5b5" stroke-width=".8" stroke-dasharray="1 1"/><path d="M8.500 4.500v8M5.500 4.500h6" fill="none" stroke="#b0b0b0" stroke-width="1.600"/></svg><div class="tr" style="left:75px;top:222px">模型视图</div><svg style="left:74px;top:251px" width="14" height="14" viewBox="0 0 14 14"><rect x="0" y="0" width="14" height="4" fill="#111"/><rect x="0" y="1" width="7" height="2" fill="#0d8f8a"/><rect x="7" y="1" width="6" height="2" fill="#fff"/><rect x="0" y="5" width="14" height="4" fill="#555"/><rect x="0" y="6" width="7" height="2" fill="#0d8f8a"/><rect x="7" y="6" width="6" height="2" fill="#fff"/><rect x="0" y="10" width="14" height="4" fill="#111"/><rect x="0" y="11" width="7" height="2" fill="#0d8f8a"/><rect x="7" y="11" width="6" height="2" fill="#fff"/><rect x="0" y="4" width="14" height="1" fill="#d8d8d8"/><rect x="0" y="9" width="14" height="1" fill="#d8d8d8"/></svg><div class="tr" style="left:94px;top:246px">辅助模型</div><svg style="left:74px;top:274px" width="16" height="16" viewBox="0 0 16 16"><path d="M0.500 15.500v-14.500h5v14.500M5.500 5.500h4.500v10M10 8.500h5v7" fill="none" stroke="#b0b0b0" stroke-width="1"/><path d="M2 4h2M2 7h2M2 10h2M7 8h1.500M7 11h1.500M12 11h1.500" stroke="#c5c5c5" stroke-width="1"/><path d="M0 15.500h16" stroke="#b0b0b0"/></svg><div class="tr" style="left:94px;top:270px">全楼模型</div><div class="ex" style="left:58px;top:302px"></div><svg style="left:73px;top:298px" width="18" height="16" viewBox="0 0 18 16"><g fill="#f7f7f7" stroke="#c9c9c9" stroke-width=".9"><path d="M1 10.500l8-3.500 8 3.500-8 3.500z"/><path d="M1 7.500l8-3.500 8 3.500-8 3.500z"/><path d="M1 4.500l8-3.500 8 3.500-8 3.500z"/></g></svg><div class="tr" style="left:94px;top:294px">自然层</div><svg style="left:93px;top:323px" width="14" height="14" viewBox="0 0 14 14"><rect x="0" y="0" width="14" height="4" fill="#111"/><rect x="0" y="1" width="7" height="2" fill="#0d8f8a"/><rect x="7" y="1" width="6" height="2" fill="#fff"/><rect x="0" y="5" width="14" height="4" fill="#555"/><rect x="0" y="6" width="7" height="2" fill="#0d8f8a"/><rect x="7" y="6" width="6" height="2" fill="#fff"/><rect x="0" y="10" width="14" height="4" fill="#111"/><rect x="0" y="11" width="7" height="2" fill="#0d8f8a"/><rect x="7" y="11" width="6" height="2" fill="#fff"/><rect x="0" y="4" width="14" height="1" fill="#d8d8d8"/><rect x="0" y="9" width="14" height="1" fill="#d8d8d8"/></svg><div class="tr" style="left:113px;top:318px">自然层1(标准层1)</div><svg style="left:93px;top:347px" width="14" height="14" viewBox="0 0 14 14"><rect x="0" y="0" width="14" height="4" fill="#111"/><rect x="0" y="1" width="7" height="2" fill="#0d8f8a"/><rect x="7" y="1" width="6" height="2" fill="#fff"/><rect x="0" y="5" width="14" height="4" fill="#555"/><rect x="0" y="6" width="7" height="2" fill="#0d8f8a"/><rect x="7" y="6" width="6" height="2" fill="#fff"/><rect x="0" y="10" width="14" height="4" fill="#111"/><rect x="0" y="11" width="7" height="2" fill="#0d8f8a"/><rect x="7" y="11" width="6" height="2" fill="#fff"/><rect x="0" y="4" width="14" height="1" fill="#d8d8d8"/><rect x="0" y="9" width="14" height="1" fill="#d8d8d8"/></svg><div class="tr" style="left:113px;top:342px">自然层2(标准层1)</div><svg style="left:93px;top:371px" width="14" height="14" viewBox="0 0 14 14"><rect x="0" y="0" width="14" height="4" fill="#111"/><rect x="0" y="1" width="7" height="2" fill="#0d8f8a"/><rect x="7" y="1" width="6" height="2" fill="#fff"/><rect x="0" y="5" width="14" height="4" fill="#555"/><rect x="0" y="6" width="7" height="2" fill="#0d8f8a"/><rect x="7" y="6" width="6" height="2" fill="#fff"/><rect x="0" y="10" width="14" height="4" fill="#111"/><rect x="0" y="11" width="7" height="2" fill="#0d8f8a"/><rect x="7" y="11" width="6" height="2" fill="#fff"/><rect x="0" y="4" width="14" height="1" fill="#d8d8d8"/><rect x="0" y="9" width="14" height="1" fill="#d8d8d8"/></svg><div class="tr" style="left:113px;top:366px">自然层3(标准层1)</div><div class="ex" style="left:58px;top:398px"></div><svg style="left:73px;top:394px" width="18" height="16" viewBox="0 0 18 16"><g stroke-width=".9"><path d="M1 11l8-3.500 8 3.500-8 3.500z" fill="#e4e4e4" stroke="#b5b5b5"/><path d="M1 8l8-3.500 8 3.500-8 3.500z" fill="#d0d0d0" stroke="#a5a5a5"/><path d="M1 4.500l8-3.500 8 3.500-8 3.500z" fill="#707070" stroke="#606060"/></g></svg><div class="tr" style="left:94px;top:390px">标准层</div><svg style="left:93px;top:419px" width="14" height="14" viewBox="0 0 14 14"><rect x="0" y="0" width="14" height="4" fill="#111"/><rect x="0" y="1" width="7" height="2" fill="#0d8f8a"/><rect x="7" y="1" width="6" height="2" fill="#fff"/><rect x="0" y="5" width="14" height="4" fill="#555"/><rect x="0" y="6" width="7" height="2" fill="#0d8f8a"/><rect x="7" y="6" width="6" height="2" fill="#fff"/><rect x="0" y="10" width="14" height="4" fill="#111"/><rect x="0" y="11" width="7" height="2" fill="#0d8f8a"/><rect x="7" y="11" width="6" height="2" fill="#fff"/><rect x="0" y="4" width="14" height="1" fill="#d8d8d8"/><rect x="0" y="9" width="14" height="1" fill="#d8d8d8"/></svg><div class="tr" style="left:113px;top:414px">标准层1</div><div style="left:390px;top:137px;width:1296px;height:30px;background:#efefef;border-top:1px solid #fff;border-left:1px solid #fff"></div><div style="left:531px;top:140px;width:24px;height:24px;background:#cbcbcb"></div><svg style="left:405px;top:144px" width="16" height="16" viewBox="0 0 16 16"><path d="M.6 5v-4.400h4.400M11 .6h4.400v4.400M15.400 11v4.400h-4.400M5 15.400h-4.400v-4.400" stroke="#1a1a1a" stroke-width="1.200" fill="none"/><circle cx="8" cy="8" r="5.300" fill="none" stroke="#1a1a1a" stroke-width=".9"/><path d="M8 1.500v13M1.500 8h13" stroke="#111" stroke-width="2.100" fill="none"/></svg><svg style="left:431px;top:144px" width="16" height="16" viewBox="0 0 16 16"><path d="M5.500 9.500v-6.300a1.100 1.100 0 0 1 2.200 0v4.300M7.700 7.500v-6a1.100 1.100 0 0 1 2.200 0v6M9.900 7.500v-5a1.100 1.100 0 0 1 2.200 0v5.500M12.100 8v-3.200a1.100 1.100 0 0 1 2.200 0v6.200c0 2.800-1.200 4.400-4 4.400h-2.800c-1.600 0-2.600-.8-3.500-2.100l-2.600-3.800c-.6-1 .7-1.800 1.600-1l1.900 1.800" stroke="#1a1a1a" stroke-width="1.200" fill="none"/></svg><svg style="left:457px;top:144px" width="17" height="16" viewBox="0 0 17 16"><path d="M9 1.200c-3 1.500-7.500 4.500-7.800 6.300c-.3 1.800 4 2 8.300 .8" stroke="#1a1a1a" stroke-width="1.200" fill="none" stroke-dasharray="3 1.200"/><path d="M8 14.800c3-1.500 7.500-4.500 7.800-6.300c.3-1.800-3-2.200-6.300-1.300" stroke="#1a1a1a" stroke-width="1.200" fill="none" stroke-dasharray="3 1.200"/><path d="M9 1.200c1.500 1 2.500 3 3 5M8 14.800c-1.500-1-2-2-2.500-3.500" stroke="#1a1a1a" stroke-width="1.200" fill="none"/><path d="M10.300 5.300l1.900 1.700 1-2.400M7.300 11.700l-2-1-.5 2.300" stroke="#1a1a1a" stroke-width="1.200" fill="none" stroke-width="1.300"/></svg><svg style="left:483px;top:144px" width="16" height="16" viewBox="0 0 16 16"><path d="M.6 4.600h10.800v10.800h-10.800z" fill="#fdfdfd" stroke="#1a1a1a" stroke-width="1.200"/><path d="M.6 4.600l4-4h10.800l-4 4z" fill="#fdfdfd" stroke="#1a1a1a" stroke-width="1.200"/><path d="M15.400 .6v10.800l-4 4v-10.800z" fill="#fdfdfd" stroke="#1a1a1a" stroke-width="1.200"/></svg><svg style="left:509px;top:144px" width="16" height="16" viewBox="0 0 16 16"><path d="M.6 4.600h10.800v10.800h-10.800zM.6 4.600l4-4h10.800l-4 4M15.400 .6v10.800l-4 4M4.600 .6v10.800h10.800M4.600 11.400l-4 4" stroke="#1a1a1a" stroke-width="1.200" fill="none" stroke-width="1.100"/></svg><svg style="left:535px;top:144px" width="16" height="16" viewBox="0 0 16 16"><path d="M.6 4.600h10.800v10.800h-10.800z" fill="#7db6d9" stroke="#1a1a1a" stroke-width="1.100"/><path d="M.6 4.600l4-4h10.800l-4 4z" fill="#b5e0f7" stroke="#1a1a1a" stroke-width="1.100"/><path d="M15.400 .6v10.800l-4 4v-10.800z" fill="#3f80b3" stroke="#1a1a1a" stroke-width="1.100"/></svg><svg style="left:563px;top:147px" width="12" height="11" viewBox="0 0 12 11"><path d="M.7 .8l5.300 4 5.300-4M.7 5.400l5.300 4 5.300-4" stroke="#1a1a1a" stroke-width="1.200" fill="none" stroke-width="1.300"/></svg><div style="left:390px;top:167px;width:1296px;height:796px;background:#e3e3e3;border-left:1px solid #fff"></div><div style="left:1686px;top:137px;width:1px;height:859px;background:#fdfdfd"></div><div style="left:1687px;top:34px;width:1px;height:962px;background:#d6d6d6"></div><svg style="left:0;top:0" width="1688" height="1020" viewBox="0 0 1688 1020"><polygon points="904.3,432.4 1191.7,276.4 1210.2,288.9 921.2,444.5" fill="#3d6fc1" /><polygon points="921.2,444.5 1210.2,288.9 1210.2,341.0 921.2,496.6" fill="#264a82" /><polygon points="904.3,432.4 921.2,444.5 921.2,496.6 904.3,484.5" fill="#223f74" /><polyline points="904.3,432.4 1191.7,276.4 1210.2,288.9 921.2,444.5 904.3,432.4 904.3,484.5 921.2,496.6 921.2,444.5" fill="none" stroke="#6f7f96" stroke-width="0.8" /><polyline points="1210.2,288.9 1210.2,341.0 921.2,496.6" fill="none" stroke="#6f7f96" stroke-width="0.8" /><polygon points="934.9,479.4 934.9,520.6 946.3,514.6 946.3,473.6" fill="#a0acab" /><polygon points="912.9,464.5 932.4,455.0 946.3,463.9 946.3,473.6 934.9,479.4" fill="rgba(158,194,188,0.58)" /><polygon points="946.3,463.3 1233.6,305.6 1252.0,318.5 963.1,475.5" fill="#3d6fc1" /><polygon points="963.1,475.5 1252.0,318.5 1252.0,370.5 963.1,526.3" fill="#264a82" /><polygon points="946.3,463.3 963.1,475.5 963.1,526.3 946.3,514.6" fill="#223f74" /><polyline points="946.3,463.3 1233.6,305.6 1252.0,318.5 963.1,475.5 946.3,463.3 946.3,514.6 963.1,526.3 963.1,475.5" fill="none" stroke="#6f7f96" stroke-width="0.8" /><polyline points="1252.0,318.5 1252.0,370.5 963.1,526.3" fill="none" stroke="#6f7f96" stroke-width="0.8" /><polygon points="986.7,515.8 986.7,557.2 998.3,550.6 998.3,509.9" fill="#a0acab" /><polygon points="954.9,494.7 974.6,484.6 998.3,500.4 998.3,509.9 986.7,515.8" fill="rgba(158,194,188,0.58)" /><polygon points="998.3,499.0 1286.5,342.5 1304.0,355.2 1015.6,511.5" fill="#3d6fc1" /><polygon points="1015.6,511.5 1304.0,355.2 1304.0,407.0 1015.6,561.8" fill="#264a82" /><polygon points="998.3,499.0 1015.6,511.5 1015.6,561.8 998.3,550.6" fill="#223f74" /><polyline points="998.3,499.0 1286.5,342.5 1304.0,355.2 1015.6,511.5 998.3,499.0 998.3,550.6 1015.6,561.8 1015.6,511.5" fill="none" stroke="#6f7f96" stroke-width="0.8" /><polyline points="1304.0,355.2 1304.0,407.0 1015.6,561.8" fill="none" stroke="#6f7f96" stroke-width="0.8" /><polygon points="1015.6,511.5 1018.2,512.1 1018.2,561.8 1015.6,561.8" fill="#5d6f90" /><polygon points="1018.2,512.1 1305.0,355.9 1323.7,368.5 1035.0,524.0" fill="#3d6fc1" /><polygon points="1035.0,524.0 1323.7,368.5 1323.7,420.3 1035.0,574.9" fill="#264a82" /><polygon points="1018.2,512.1 1035.0,524.0 1035.0,574.9 1018.2,561.8" fill="#223f74" /><polyline points="1018.2,512.1 1305.0,355.9 1323.7,368.5 1035.0,524.0 1018.2,512.1 1018.2,561.8 1035.0,574.9 1035.0,524.0" fill="none" stroke="#6f7f96" stroke-width="0.8" /><polyline points="1323.7,368.5 1323.7,420.3 1035.0,574.9" fill="none" stroke="#6f7f96" stroke-width="0.8" /><polyline points="1015.6,511.5 1304.0,355.2" fill="none" stroke="#4b5f7f" stroke-width="1.2" /><polygon points="1026.9,544.5 1046.3,532.7 1086.8,561.3 1066.9,571.7" fill="rgba(158,194,188,0.58)" /><polygon points="1066.9,571.7 1086.8,561.3 1087.4,890.2 1067.3,900.5" fill="rgba(100,124,122,0.50)" /><polygon points="892.2,490.9 904.3,484.5 912.9,490.6 912.9,504.7" fill="#bcd0cd" /><polygon points="934.9,520.6 946.3,514.6 954.9,520.6 954.9,534.1" fill="#bcd0cd" /><polygon points="986.7,557.2 998.3,550.6 1026.9,569.6 1026.9,584.2" fill="#bcd0cd" /><polygon points="892.2,490.9 912.9,504.7 912.9,464.5 934.9,479.4 934.9,520.6 954.9,534.1 954.9,494.7 986.7,515.8 986.7,557.2 1026.9,584.2 1026.9,544.5 1066.9,571.7 1067.3,900.5 892.2,778.3" fill="rgba(94,116,114,0.55)" /><polyline points="892.2,490.9 912.9,504.7 912.9,464.5 934.9,479.4 934.9,520.6 954.9,534.1 954.9,494.7 986.7,515.8 986.7,557.2 1026.9,584.2 1026.9,544.5 1066.9,571.7 1067.3,900.5 892.2,778.3 892.2,490.9" fill="none" stroke="#7f8787" stroke-width="1.2" /><polyline points="892.2,778.3 912.3,768.1 1087.4,890.2 1067.3,900.5" fill="none" stroke="#7f8787" stroke-width="0.8" /><polyline points="912.3,768.1 912.3,505.0" fill="none" stroke="#7f8787" stroke-width="0.8" /><polyline points="1087.4,890.2 1086.8,561.3 1066.9,571.7" fill="none" stroke="#7f8787" stroke-width="1" /><polyline points="892.2,490.9 904.3,484.5" fill="none" stroke="#7f8787" stroke-width="1" /><polyline points="912.9,464.5 932.4,455.0 946.3,463.9" fill="none" stroke="#7f8787" stroke-width="1" /><polyline points="934.9,479.4 946.3,473.6" fill="none" stroke="#7f8787" stroke-width="1" /><polyline points="934.9,520.6 946.3,514.6" fill="none" stroke="#7f8787" stroke-width="1" /><polyline points="954.9,494.7 974.6,484.6 998.3,500.4" fill="none" stroke="#7f8787" stroke-width="1" /><polyline points="986.7,515.8 998.3,509.9" fill="none" stroke="#7f8787" stroke-width="1" /><polyline points="986.7,557.2 998.3,550.6" fill="none" stroke="#7f8787" stroke-width="1" /><polyline points="1026.9,544.5 1046.3,532.7 1086.8,561.3" fill="none" stroke="#7f8787" stroke-width="1" /><polyline points="932.4,455.0 932.4,497.0 912.9,507.0" fill="none" stroke="#9aa5a6" stroke-width="0.8" opacity=".8"/><polyline points="974.6,484.6 974.6,526.0 954.9,536.0" fill="none" stroke="#9aa5a6" stroke-width="0.8" opacity=".8"/><polyline points="1046.3,532.7 1046.3,574.0 1026.9,586.0" fill="none" stroke="#9aa5a6" stroke-width="0.8" opacity=".8"/><polyline points="921.2,444.5 921.2,496.6 912.9,491.0" fill="none" stroke="#8f9aa0" stroke-width="0.8" opacity=".7"/><polyline points="963.1,475.5 963.1,526.3" fill="none" stroke="#8f9aa0" stroke-width="0.8" opacity=".7"/><polyline points="1035.0,524.0 1035.0,574.9" fill="none" stroke="#8f9aa0" stroke-width="0.8" opacity=".7"/><text transform="matrix(-0.816,-0.566,0.82,-0.443,1005,493)" font-family="Liberation Serif,serif" font-size="22" fill="#dfe9f8" fill-opacity=".35" stroke="#eaf1fb" stroke-width=".7" letter-spacing="0.2">NQ-2033</text><polygon points="1632.3,199.9 1653.8,215.0 1653.8,240.7 1629.3,254.0 1608.0,238.9 1608.0,213.4" fill="#9f9f9f" /><polygon points="1632.3,199.9 1653.8,215.0 1629.3,227.6 1608.0,213.4" fill="#a3a3a3" /><polygon points="1608.0,213.4 1629.3,227.6 1629.3,254.0 1608.0,238.9" fill="#9f9f9f" /><polygon points="1629.3,227.6 1653.8,215.0 1653.8,240.7 1629.3,254.0" fill="#9c9c9c" /><text transform="matrix(1.715,-0.882,1.491,0.994,1628.700,222.900)" font-family="'Liberation Serif','Noto Serif CJK SC',serif" font-size="10" fill="#6c6c6c">上</text><text transform="matrix(1.491,0.994,0,1.785,1611.200,235)" font-family="'Liberation Serif','Noto Serif CJK SC',serif" font-size="10" fill="#707070">左</text><text transform="matrix(1.715,-0.882,0,1.850,1634.200,245.500)" font-family="'Liberation Serif','Noto Serif CJK SC',serif" font-size="10" fill="#707070">前</text><polygon points="885.4,414.0 894.6,444.0 898.8,442.7 895.5,460.2 883.9,445.3 888.0,446.0" fill="#2e8b2e" /><polygon points="921.2,611.9 984.3,574.0 981.5,571.1 999.8,570.2 989.0,584.2 987.7,580.0" fill="#2e8b2e" /><path d="M785 358h120a3 3 0 0 1 3 3v42a3 3 0 0 1-3 3h-120a3 3 0 0 1-3-3v-17l-4-4 4-4v-17a3 3 0 0 1 3-3z" fill="#000" fill-opacity=".61"/><path d="M792 588h120a3 3 0 0 1 3 3v42a3 3 0 0 1-3 3h-120a3 3 0 0 1-3-3v-17l-4-4 4-4v-17a3 3 0 0 1 3-3z" fill="#000" fill-opacity=".61"/><circle cx="762.800" cy="382" r="10" fill="#f01ef0"/><circle cx="770" cy="612" r="10" fill="#f01ef0"/></svg><div style="left:788px;top:365px;width:112px;height:38px;font:27px/38px 'Liberation Sans','Noto Sans CJK SC',sans-serif;color:#fff;white-space:nowrap">墙边扩大</div><div style="left:795px;top:595px;width:112px;height:38px;font:27px/38px 'Liberation Sans','Noto Sans CJK SC',sans-serif;color:#fff;white-space:nowrap">缺口合并</div><div style="left:753px;top:374px;width:20px;height:16px;font:12px/16px 'Liberation Sans','Noto Sans CJK SC',sans-serif;color:#fff;text-align:center">1</div><div style="left:760px;top:604px;width:20px;height:16px;font:12px/16px 'Liberation Sans','Noto Sans CJK SC',sans-serif;color:#fff;text-align:center">2</div><div style="left:822px;top:937px;width:433px;height:26px;background:#f2f2f2;border:2px solid #858585"></div><div style="left:1230px;top:939px;width:2px;height:22px;background:#858585"></div><div class="t" style="left:835px;top:940px;height:18px;line-height:18px;font-size:14px;letter-spacing:1px;color:#9c9c9c">在此输入命令... &lt;隐藏:Ctrl+F12&gt;</div><svg style="left:1212px;top:942px" width="16" height="16" viewBox="0 0 16 16"><circle cx="10" cy="6" r="4.500" fill="none" stroke="#9aa3c0" stroke-width="1.300"/><path d="M6.500 9.500l-5 5" stroke="#9aa3c0" stroke-width="1.800"/></svg><div style="left:1237px;top:945px;width:0;height:0;border:5.500px solid transparent;border-bottom:9px solid #666;border-top:none"></div><div style="left:322px;top:174px;width:357px;height:761px;border-radius:7px;border:1px solid #3f352e;background:linear-gradient(90deg,#f5ebe4 0%,#efe0d4 10%,#e1c6b3 30%,#d6b59d 50%,#dcbfaa 62%,#ebd9cb 80%,#e6d0be 100%);box-shadow:0 0 0 1px rgba(255,255,255,.6) inset"></div><div style="left:324px;top:200px;width:5px;height:733px;background:linear-gradient(#f4e6dc 0%,#ecd6c6 35%,#ddb9a1 70%,#dbb79d 100%)"></div><div style="left:672px;top:196px;width:6px;height:737px;background:linear-gradient(#ead3c1 0%,#e6cab6 35%,#ddb9a1 70%,#d4b097 100%)"></div><div style="left:329px;top:928px;width:343px;height:6px;background:linear-gradient(90deg,#dbb79d 0%,#d9b69c 15%,#c9a88f 25%,#c7a68d 60%,#d4b097 100%)"></div><div class="dt" style="left:330px;top:183px">缺口调整</div><div style="left:625px;top:175px;width:47px;height:19px;border:1px solid #5a2f28;border-top:none;border-radius:0 0 5px 5px;background:linear-gradient(#f6ab9c 0%,#e58b78 25%,#de7761 47%,#cf4527 50%,#cc4a2c 70%,#dc7354 100%);box-shadow:inset 0 0 0 1px rgba(255,255,255,.55)"></div><svg style="left:643px;top:178px" width="13" height="12" viewBox="0 0 13 12"><path d="M3.300 3l6.400 6M9.700 3l-6.400 6" stroke="#4a5570" stroke-width="3.800" stroke-linecap="square"/><path d="M3.300 3l6.400 6M9.700 3l-6.400 6" stroke="#fff" stroke-width="2.400" stroke-linecap="square"/></svg><div style="left:329px;top:203px;width:343px;height:725px;background:#f0f0f0;border:1px solid #6a6058"></div><div style="left:330px;top:204px;width:341px;height:1px;background:#fff"></div><div class="sh" style="top:207px;line-height:22px">内墙/内叶墙缺口设置</div><svg style="left:661px;top:210px" width="7" height="9" viewBox="0 0 7 9"><path d="M.8 .8l2.700 2.400 2.700-2.400M.8 4.300l2.700 2.400 2.700-2.400" fill="none" stroke="#000" stroke-width="1.500"/></svg><div class="sh" style="top:508px;height:19px;line-height:24px">外叶墙/保温层缺口设置</div><svg style="left:661px;top:512px" width="7" height="9" viewBox="0 0 7 9"><path d="M.8 .8l2.700 2.400 2.700-2.400M.8 4.300l2.700 2.400 2.700-2.400" fill="none" stroke="#000" stroke-width="1.500"/></svg><div class="sh" style="top:797px;height:19px;line-height:25px">生效范围</div><svg style="left:661px;top:801px" width="7" height="9" viewBox="0 0 7 9"><path d="M.8 .8l2.700 2.400 2.700-2.400M.8 4.300l2.700 2.400 2.700-2.400" fill="none" stroke="#000" stroke-width="1.500"/></svg><div style="left:330px;top:506px;width:341px;height:1px;background:#9a9a9a"></div><div style="left:330px;top:507px;width:341px;height:1px;background:#fbfbfb"></div><div style="left:330px;top:795px;width:341px;height:1px;background:#9a9a9a"></div><div style="left:330px;top:796px;width:341px;height:1px;background:#fbfbfb"></div><div style="left:330px;top:877px;width:341px;height:1px;background:#9a9a9a"></div><div style="left:330px;top:878px;width:341px;height:1px;background:#fbfbfb"></div><div style="left:330px;top:527px;width:1px;height:268px;background:#a5a5a5"></div><div style="left:670px;top:527px;width:1px;height:268px;background:#a5a5a5"></div><div style="left:330px;top:816px;width:1px;height:61px;background:#a5a5a5"></div><div style="left:670px;top:816px;width:1px;height:61px;background:#a5a5a5"></div><svg style="left:0;top:0" width="1688" height="1020" viewBox="0 0 1688 1020"><rect x="368.0" y="247.0" width="260.0" height="140.0" fill="#f5f5f5" /><rect x="374.5" y="270.5" width="89.0" height="84.0" fill="#f5f5f5" stroke="#8a8a8a" stroke-width="1"/><rect x="412.0" y="270.0" width="14.0" height="64.0" fill="#99cccc" /><rect x="417.0" y="280.0" width="47.0" height="17.5" fill="#f5f5f5" /><rect x="417.0" y="307.0" width="47.0" height="17.0" fill="#f5f5f5" /><rect x="422.0" y="282.0" width="42.0" height="12.0" fill="#9999ff" /><rect x="422.0" y="310.0" width="42.0" height="12.0" fill="#9999ff" /><rect x="412.0" y="334.0" width="14.0" height="10.0" fill="#ffcc66" /><rect x="401.0" y="344.0" width="36.0" height="10.0" fill="#ffcc66" /><rect x="375.0" y="344.0" width="26.0" height="10.0" fill="#99cccc" /><rect x="437.0" y="344.0" width="27.0" height="10.0" fill="#99cccc" /><line x1="419.5" y1="255" x2="419.5" y2="265" stroke="#222" stroke-width="1"/><line x1="419.5" y1="359" x2="419.5" y2="369" stroke="#222" stroke-width="1"/><text x="426" y="265.5" font-family='"Liberation Sans","Noto Sans CJK SC",sans-serif' font-size="12" fill="#222" text-anchor="start" >A</text><text x="426" y="369.5" font-family='"Liberation Sans","Noto Sans CJK SC",sans-serif' font-size="12" fill="#222" text-anchor="start" >A</text><path d="M416 270.500l2-2.500 2 4 2-1.500" fill="none" stroke="#8a8a8a" stroke-width=".8"/><path d="M374.500 311l-3 2.500 5 1-2 2" fill="none" stroke="#8a8a8a" stroke-width=".8"/><path d="M463.500 311l3 2.500-5 1 2 2" fill="none" stroke="#8a8a8a" stroke-width=".8"/><line x1="432.5" y1="293" x2="432.5" y2="309" stroke="#1f9a1f" stroke-width="1"/><line x1="427" y1="295.5" x2="436" y2="295.5" stroke="#1f9a1f" stroke-width="1"/><line x1="427" y1="305.5" x2="436" y2="305.5" stroke="#1f9a1f" stroke-width="1"/><line x1="432.5" y1="321" x2="432.5" y2="336" stroke="#1f9a1f" stroke-width="1"/><line x1="427" y1="323.5" x2="436" y2="323.5" stroke="#1f9a1f" stroke-width="1"/><line x1="427" y1="332.5" x2="436" y2="332.5" stroke="#1f9a1f" stroke-width="1"/><line x1="407" y1="307.5" x2="421" y2="307.5" stroke="#1f9a1f" stroke-width="1"/><line x1="411.5" y1="305" x2="411.5" y2="321" stroke="#1f9a1f" stroke-width="1"/><line x1="417.5" y1="305" x2="417.5" y2="321" stroke="#1f9a1f" stroke-width="1"/><text x="439.5" y="306.5" font-family='"Liberation Sans","Noto Sans CJK SC",sans-serif' font-size="11.5" fill="#e05058" text-anchor="start" >d1</text><text x="439.5" y="334.5" font-family='"Liberation Sans","Noto Sans CJK SC",sans-serif' font-size="11.5" fill="#e05058" text-anchor="start" >d2</text><text x="393" y="318.5" font-family='"Liberation Sans","Noto Sans CJK SC",sans-serif' font-size="11.5" fill="#e05058" text-anchor="start" >b1</text><text x="422" y="385" font-family='"Liberation Sans","Noto Sans CJK SC",sans-serif' font-size="11" fill="#e05058" text-anchor="middle" >俯视图</text><text x="548" y="385" font-family='"Liberation Sans","Noto Sans CJK SC",sans-serif' font-size="11" fill="#e05058" text-anchor="middle" >A-A剖面</text><rect x="480.0" y="301.0" width="125.5" height="53.5" fill="#99cccc" /><rect x="500.0" y="301.0" width="33.0" height="34.0" fill="#f5f5f5" /><rect x="553.0" y="301.0" width="33.0" height="34.0" fill="#f5f5f5" /><rect x="507.0" y="301.0" width="20.0" height="27.0" fill="#9999ff" /><rect x="559.0" y="301.0" width="20.0" height="27.0" fill="#9999ff" /><rect x="507.0" y="301.0" width="20.0" height="7.0" fill="#b3b3ff" /><rect x="559.0" y="301.0" width="20.0" height="7.0" fill="#b3b3ff" /><path d="M605.500 301v53.500M480 354.500h125.500" stroke="#8a8a8a" stroke-width="1" fill="none"/><path d="M605.500 320l-3 2.500 4.500 1-2 2M538 354.500l2-2.500 2 4 2-1.500" fill="none" stroke="#9a9a9a" stroke-width=".8"/><line x1="477.5" y1="286.5" x2="511.5" y2="286.5" stroke="#1f9a1f" stroke-width="1"/><line x1="480.5" y1="284" x2="480.5" y2="299" stroke="#1f9a1f" stroke-width="1"/><line x1="499.5" y1="284" x2="499.5" y2="299" stroke="#1f9a1f" stroke-width="1"/><line x1="507.5" y1="284" x2="507.5" y2="299" stroke="#1f9a1f" stroke-width="1"/><line x1="523.5" y1="286.5" x2="563.5" y2="286.5" stroke="#1f9a1f" stroke-width="1"/><line x1="526.5" y1="284" x2="526.5" y2="299" stroke="#1f9a1f" stroke-width="1"/><line x1="533.5" y1="284" x2="533.5" y2="299" stroke="#1f9a1f" stroke-width="1"/><line x1="552.5" y1="284" x2="552.5" y2="299" stroke="#1f9a1f" stroke-width="1"/><line x1="559.5" y1="284" x2="559.5" y2="299" stroke="#1f9a1f" stroke-width="1"/><line x1="575.5" y1="286.5" x2="590.5" y2="286.5" stroke="#1f9a1f" stroke-width="1"/><line x1="578.5" y1="284" x2="578.5" y2="299" stroke="#1f9a1f" stroke-width="1"/><line x1="586.5" y1="284" x2="586.5" y2="299" stroke="#1f9a1f" stroke-width="1"/><text x="480.7" y="278.5" font-family='"Liberation Sans","Noto Sans CJK SC",sans-serif' font-size="11.5" fill="#e05058" text-anchor="start" >d2</text><text x="498.6" y="278.5" font-family='"Liberation Sans","Noto Sans CJK SC",sans-serif' font-size="11.5" fill="#e05058" text-anchor="start" >e1</text><text x="520.5" y="278.5" font-family='"Liberation Sans","Noto Sans CJK SC",sans-serif' font-size="11.5" fill="#e05058" text-anchor="start" >e1</text><text x="536.2" y="278.5" font-family='"Liberation Sans","Noto Sans CJK SC",sans-serif' font-size="11.5" fill="#e05058" text-anchor="start" >d1</text><text x="554.5" y="278.5" font-family='"Liberation Sans","Noto Sans CJK SC",sans-serif' font-size="11.5" fill="#e05058" text-anchor="start" >e1</text><text x="577.8" y="278.5" font-family='"Liberation Sans","Noto Sans CJK SC",sans-serif' font-size="11.5" fill="#e05058" text-anchor="start" >e1</text><line x1="493" y1="327.5" x2="506" y2="327.5" stroke="#1f9a1f" stroke-width="1"/><line x1="493" y1="334.5" x2="506" y2="334.5" stroke="#1f9a1f" stroke-width="1"/><line x1="496.5" y1="323" x2="496.5" y2="337" stroke="#1f9a1f" stroke-width="1"/><line x1="583" y1="327.5" x2="596" y2="327.5" stroke="#1f9a1f" stroke-width="1"/><line x1="583" y1="334.5" x2="596" y2="334.5" stroke="#1f9a1f" stroke-width="1"/><line x1="592.5" y1="323" x2="592.5" y2="337" stroke="#1f9a1f" stroke-width="1"/><text x="476" y="335.5" font-family='"Liberation Sans","Noto Sans CJK SC",sans-serif' font-size="11.5" fill="#e05058" text-anchor="start" >e2</text><text x="598" y="338" font-family='"Liberation Sans","Noto Sans CJK SC",sans-serif' font-size="11.5" fill="#e05058" text-anchor="start" >e2</text><rect x="370.0" y="546.0" width="260.0" height="167.0" fill="#f5f5f5" /><path d="M406 557.500h69.500v129" fill="none" stroke="#8a8a8a" stroke-width="1"/><rect x="422.0" y="557.5" width="6.0" height="11.0" fill="#99cccc" /><rect x="428.0" y="557.5" width="6.0" height="11.0" fill="#9999ff" /><rect x="422.0" y="599.0" width="6.0" height="13.0" fill="#99cccc" /><rect x="428.0" y="599.0" width="6.0" height="13.0" fill="#9999ff" /><rect x="422.0" y="642.0" width="6.0" height="14.5" fill="#99cccc" /><rect x="428.0" y="642.0" width="6.0" height="14.5" fill="#9999ff" /><rect x="414.0" y="573.0" width="20.0" height="21.5" fill="#f4b4c0" /><rect x="414.0" y="616.0" width="20.0" height="21.5" fill="#f4b4c0" /><rect x="434.0" y="557.5" width="14.0" height="90.5" fill="#99cccc" /><rect x="422.0" y="661.0" width="34.0" height="21.5" fill="#99cccc" /><rect x="428.0" y="661.0" width="25.0" height="15.5" fill="#9999ff" /><rect x="458.5" y="661.0" width="17.0" height="9.5" fill="#99cccc" /><rect x="462.0" y="670.5" width="13.5" height="6.0" fill="#9999ff" /><rect x="458.5" y="676.5" width="17.0" height="6.0" fill="#99cccc" /><rect x="453.0" y="670.5" width="9.0" height="6.0" fill="#f5f5f5" /><rect x="434.0" y="648.0" width="14.0" height="22.5" fill="#ffcc66" /><rect x="448.0" y="661.0" width="11.0" height="9.5" fill="#ffcc66" /><path d="M436 557.500l2-2.500 2 4 2-1.500M475.500 620l3 1.500-5 2 2 1.500" fill="none" stroke="#8a8a8a" stroke-width=".8"/><line x1="404.5" y1="566" x2="404.5" y2="576" stroke="#1f9a1f" stroke-width="1"/><line x1="404.5" y1="590" x2="404.5" y2="619" stroke="#1f9a1f" stroke-width="1"/><line x1="404.5" y1="634" x2="404.5" y2="660" stroke="#1f9a1f" stroke-width="1"/><line x1="401" y1="568.5" x2="418" y2="568.5" stroke="#1f9a1f" stroke-width="1"/><line x1="401" y1="573.5" x2="418" y2="573.5" stroke="#1f9a1f" stroke-width="1"/><line x1="401" y1="594.5" x2="418" y2="594.5" stroke="#1f9a1f" stroke-width="1"/><line x1="401" y1="599.5" x2="418" y2="599.5" stroke="#1f9a1f" stroke-width="1"/><line x1="401" y1="611.5" x2="418" y2="611.5" stroke="#1f9a1f" stroke-width="1"/><line x1="401" y1="616.5" x2="418" y2="616.5" stroke="#1f9a1f" stroke-width="1"/><line x1="401" y1="637.5" x2="418" y2="637.5" stroke="#1f9a1f" stroke-width="1"/><line x1="401" y1="642.5" x2="418" y2="642.5" stroke="#1f9a1f" stroke-width="1"/><line x1="401" y1="656.5" x2="418" y2="656.5" stroke="#1f9a1f" stroke-width="1"/><text x="385.5" y="576" font-family='"Liberation Sans","Noto Sans CJK SC",sans-serif' font-size="11.5" fill="#e05058" text-anchor="start" >e1</text><text x="385.5" y="596" font-family='"Liberation Sans","Noto Sans CJK SC",sans-serif' font-size="11.5" fill="#e05058" text-anchor="start" >e1</text><text x="385.5" y="607.5" font-family='"Liberation Sans","Noto Sans CJK SC",sans-serif' font-size="11.5" fill="#e05058" text-anchor="start" >d1</text><text x="385.5" y="619" font-family='"Liberation Sans","Noto Sans CJK SC",sans-serif' font-size="11.5" fill="#e05058" text-anchor="start" >e1</text><text x="385.5" y="645" font-family='"Liberation Sans","Noto Sans CJK SC",sans-serif' font-size="11.5" fill="#e05058" text-anchor="start" >e1</text><text x="385.5" y="659" font-family='"Liberation Sans","Noto Sans CJK SC",sans-serif' font-size="11.5" fill="#e05058" text-anchor="start" >d2</text><text x="388.5" y="630.5" font-family='"Liberation Sans","Noto Sans CJK SC",sans-serif' font-size="11.5" fill="#222" text-anchor="start" >B</text><text x="465.5" y="630.5" font-family='"Liberation Sans","Noto Sans CJK SC",sans-serif' font-size="11.5" fill="#222" text-anchor="start" >B</text><line x1="398" y1="628.5" x2="411" y2="628.5" stroke="#222" stroke-width="1"/><line x1="449" y1="628.5" x2="462" y2="628.5" stroke="#222" stroke-width="1"/><text x="434.5" y="703" font-family='"Liberation Sans","Noto Sans CJK SC",sans-serif' font-size="11" fill="#e05058" text-anchor="middle" >俯视图</text><text x="541.5" y="703" font-family='"Liberation Sans","Noto Sans CJK SC",sans-serif' font-size="11" fill="#e05058" text-anchor="middle" >B-B剖面</text><line x1="511" y1="558.5" x2="562" y2="558.5" stroke="#8a8a8a" stroke-width="1"/><line x1="509" y1="681.5" x2="565" y2="681.5" stroke="#8a8a8a" stroke-width="1"/><line x1="497.5" y1="597" x2="497.5" y2="652" stroke="#8a8a8a" stroke-width="1"/><rect x="521.0" y="558.5" width="14.0" height="45.0" fill="#99cccc" /><rect x="535.0" y="558.5" width="8.0" height="47.0" fill="#9999ff" /><rect x="543.0" y="558.5" width="7.5" height="52.0" fill="#99cccc" stroke="#7a9a9a" stroke-width=".6"/><rect x="521.0" y="633.0" width="14.0" height="48.5" fill="#99cccc" /><rect x="535.0" y="638.0" width="8.0" height="43.5" fill="#9999ff" /><rect x="543.0" y="638.0" width="7.5" height="43.5" fill="#99cccc" /><rect x="497.5" y="614.0" width="24.5" height="7.0" fill="#fdd9ab" /><rect x="497.5" y="621.0" width="24.5" height="9.0" fill="#fdbc6c" /><rect x="528.0" y="617.0" width="97.0" height="12.0" fill="#f4b4c0" /><path d="M539 558.500l2-2.500 2 4 2-1.500M539 681.500l2-2.500 2 4 2-1.500M497.500 620l-3 1.500 5 2-2 1.500" fill="none" stroke="#8a8a8a" stroke-width=".8"/><line x1="563.5" y1="607" x2="563.5" y2="619" stroke="#1f9a1f" stroke-width="1"/><line x1="563.5" y1="625" x2="563.5" y2="640" stroke="#1f9a1f" stroke-width="1"/><line x1="554" y1="611.5" x2="567" y2="611.5" stroke="#1f9a1f" stroke-width="1"/><line x1="554" y1="616.5" x2="567" y2="616.5" stroke="#1f9a1f" stroke-width="1"/><line x1="554" y1="628.5" x2="567" y2="628.5" stroke="#1f9a1f" stroke-width="1"/><line x1="554" y1="636.5" x2="567" y2="636.5" stroke="#1f9a1f" stroke-width="1"/><text x="571.5" y="616.5" font-family='"Liberation Sans","Noto Sans CJK SC",sans-serif' font-size="11.5" fill="#e05058" text-anchor="start" >e3</text><text x="571.5" y="638.5" font-family='"Liberation Sans","Noto Sans CJK SC",sans-serif' font-size="11.5" fill="#e05058" text-anchor="start" >e2</text><text x="608" y="601" font-family='"Liberation Sans","Noto Sans CJK SC",sans-serif' font-size="8.5" fill="#9a9a9a" text-anchor="middle" >楼层标高</text><line x1="591" y1="605.5" x2="627" y2="605.5" stroke="#9a9a9a" stroke-width="1"/><line x1="587" y1="611.5" x2="610" y2="611.5" stroke="#9a9a9a" stroke-width="1"/><path d="M592.500 605.500h8.500l-4.200 4.500z" fill="none" stroke="#9a9a9a" stroke-width=".8"/></svg><div class="in" style="left:595px;top:267px;width:31px;height:20px;line-height:18px;border:1px solid #6a6a6a;border-radius:0">15</div><div class="in" style="left:589px;top:342px;width:31px;height:20px;line-height:18px;border:1px solid #6a6a6a;border-radius:0">20</div><div class="in" style="left:375px;top:546px;width:31px;height:20px;line-height:18px;border:1px solid #6a6a6a;border-radius:0">15</div><div class="in" style="left:554px;top:582px;width:31px;height:20px;line-height:18px;border:1px solid #6a6a6a;border-radius:0">20</div><div class="in" style="left:554px;top:644px;width:31px;height:20px;line-height:18px;border:1px solid #6a6a6a;border-radius:0">20</div><div class="dt" style="left:365px;top:399px">墙厚方向保留厚度b1</div><div class="in" style="left:481px;top:395px;width:35px;height:19px;line-height:17px;">0</div><div class="dt" style="left:365px;top:430px">缺口净距d1&lt;</div><div class="in" style="left:439px;top:425px;width:35px;height:19px;line-height:17px;">50</div><div class="dt" style="left:481px;top:430px">时，相邻缺口贯通合并</div><div class="dt" style="left:365px;top:462px">缺口边距d2&lt;</div><div class="in" style="left:439px;top:457px;width:35px;height:19px;line-height:17px;">50</div><div class="dt" style="left:481px;top:462px">时，缺口扩大到墙边</div><div style="left:357px;top:420px;width:252px;height:31px;border:3px solid #2d8a2d"></div><div style="left:357px;top:453px;width:252px;height:28px;border:3px solid #2d8a2d"></div><div class="dt" style="left:365px;top:726px">缺口净距d1&lt;</div><div class="in" style="left:439px;top:721px;width:33px;height:19px;line-height:17px;">50</div><div class="dt" style="left:478px;top:726px">时，相邻缺口贯通合并</div><div class="dt" style="left:365px;top:755px">缺口边距d2&lt;</div><div class="in" style="left:439px;top:751px;width:33px;height:19px;line-height:17px;">50</div><div class="dt" style="left:478px;top:755px">时，缺口扩大到外叶板边</div><div class="rad" style="left:373.5px;top:841px"></div><div class="dt" style="left:390.0px;top:842px">全楼</div><div class="rad" style="left:465.8px;top:841px"></div><div class="dt" style="left:482.3px;top:842px">本层</div><div class="rad" style="left:558.7px;top:841px"></div><div style="left:561.7px;top:844px;width:6px;height:6px;border-radius:50%;background:radial-gradient(circle at 35% 35%,#7fd0f5,#1a6fb0 60%,#0b3f70)"></div><div class="dt" style="left:575.2px;top:842px">选中构件</div><div class="btn" style="left:462px;top:897px;width:73px">生成</div><div class="btn" style="left:570px;top:897px;width:73px">关闭</div><div style="left:331px;top:205px;width:338px;height:301px;border:4px solid #f5832c;border-top-width:3px;border-right-width:3px"></div><svg style="left:0;top:0" width="1688" height="1020" viewBox="0 0 1688 1020"><polygon points="621.5,429.2 722.5,385.2 721.0,382.3 739.7,383.8 728.5,396.8 726.6,393.8" fill="#2e8b2e" /><polygon points="613.6,435.6 747.6,589.0 750.1,585.5 753.5,602.6 737.9,595.1 740.6,594.4" fill="#2e8b2e" /></svg><div style="left:8px;top:967px;width:375px;height:29px;background:#f0f0f0"></div><div style="left:383px;top:967px;width:7px;height:29px;background:#e6e6e6"></div><div style="left:8px;top:972px;width:375px;height:24px;background:#e6e6e6;border-top:1px solid #d2d2d2;border-bottom:1px solid #c4c4c4"></div><div style="left:9px;top:972px;width:71px;height:23px;background:#fff;border-right:1px solid #a5a5a5;border-bottom:1px solid #a5a5a5"></div><div class="t" style="left:14px;top:974px;color:#444">视图浏览器</div><div class="t" style="left:87px;top:974px;color:#444">属性</div><div style="left:390px;top:963px;width:1298px;height:2px;background:#f6f6f6"></div><div style="left:390px;top:965px;width:1298px;height:31px;background:#f1f1f1"></div><div style="left:8px;top:995px;width:1680px;height:1px;background:#dcdcdc"></div><div style="left:8px;top:996px;width:1680px;height:24px;background:#f1f1f1"></div><div style="left:393px;top:970px;width:2px;height:2px;background:#8e8e8e"></div><div style="left:393px;top:975px;width:2px;height:2px;background:#8e8e8e"></div><div style="left:393px;top:981px;width:2px;height:2px;background:#8e8e8e"></div><div style="left:393px;top:986px;width:2px;height:2px;background:#8e8e8e"></div><div style="left:616px;top:970px;width:2px;height:2px;background:#8e8e8e"></div><div style="left:616px;top:975px;width:2px;height:2px;background:#8e8e8e"></div><div style="left:616px;top:981px;width:2px;height:2px;background:#8e8e8e"></div><div style="left:616px;top:986px;width:2px;height:2px;background:#8e8e8e"></div><div class="vs" style="left:429px;top:968px;height:24px;background:#d6d6d6"></div><div class="vs" style="left:463px;top:968px;height:24px;background:#d6d6d6"></div><div class="vs" style="left:497px;top:968px;height:24px;background:#d6d6d6"></div><div class="vs" style="left:531px;top:968px;height:24px;background:#d6d6d6"></div><div class="vs" style="left:652px;top:968px;height:24px;background:#d6d6d6"></div><div class="vs" style="left:686px;top:968px;height:24px;background:#d6d6d6"></div><div class="vs" style="left:720px;top:968px;height:24px;background:#d6d6d6"></div><div class="vs" style="left:754px;top:968px;height:24px;background:#d6d6d6"></div><div class="vs" style="left:788px;top:968px;height:24px;background:#d6d6d6"></div><div style="left:434px;top:968px;width:24px;height:24px;background:#c9c9c9"></div><div style="left:468px;top:968px;width:24px;height:24px;background:#c9c9c9"></div><div style="left:502px;top:968px;width:24px;height:24px;background:#c9c9c9"></div><svg style="left:403px;top:972px" width="18" height="16" viewBox="0 0 18 16"><path d="M1 10l5-6h11l-5 6z" fill="#fff" stroke="#8a93a0" stroke-width=".6"/><path d="M1 10h11v2.500h-11z" fill="#e3e8ee" stroke="#8a93a0" stroke-width=".6"/><path d="M12 10l5-6v2.500l-5 6z" fill="#a9b4c2" stroke="#8a93a0" stroke-width=".6"/></svg><svg style="left:437px;top:971px" width="18" height="18" viewBox="0 0 18 18"><path d="M1 12l11-11h5l-11 11z" fill="#fff" stroke="#8a93a0" stroke-width=".6"/><path d="M1 12h5v1.500h-1.500v2h1.500v1.500h-5v-1.500h1.500v-2h-1.500z" fill="#e3e8ee" stroke="#8a93a0" stroke-width=".6"/><path d="M6 12l11-11v2l-11 11z" fill="#a9b4c2" stroke="#8a93a0" stroke-width=".6"/><path d="M6 15.500l11-11v1.500l-11 11z" fill="#8f9db0"/></svg><svg style="left:473px;top:971px" width="14" height="18" viewBox="0 0 14 18"><path d="M3 4l3-3h4l-3 3z" fill="#fff" stroke="#8a93a0" stroke-width=".6"/><rect x="3" y="4" width="4" height="13" fill="#e3e8ee" stroke="#8a93a0" stroke-width=".6"/><path d="M7 4l3-3v13l-3 3z" fill="#a9b4c2" stroke="#8a93a0" stroke-width=".6"/></svg><svg style="left:505px;top:971px" width="18" height="18" viewBox="0 0 18 18"><path d="M1 2l3-1 13 5-3 1z" fill="#fff" stroke="#8a93a0" stroke-width=".6"/><path d="M1 2l13 5v10l-13-5z" fill="#cfd8e3" stroke="#8a93a0" stroke-width=".6"/><path d="M14 7l3-1v10l-3 1z" fill="#8f9db0" stroke="#8a93a0" stroke-width=".6"/></svg><div style="left:537px;top:968px;width:71px;height:24px;background:#fff;border:1px solid #c6c6c6"></div><div class="t" style="left:541px;top:972px;color:#333">精细显示</div><div class="dd" style="left:598px;top:979px;border-top-color:#666"></div><svg style="left:627px;top:972px" width="17" height="16" viewBox="0 0 17 16"><path d="M1 4.500h15" stroke="#8fc0ee" stroke-width="1.500"/><path d="M0 4.500l3-2.500v5zM17 4.500l-3-2.500v5z" fill="#8fc0ee"/><path d="M1 9.500h15v3.500h-15z" fill="none" stroke="#b5bcc6" stroke-width="1" stroke-dasharray="1.500 1"/></svg><svg style="left:661px;top:971px" width="18" height="18" viewBox="0 0 18 18"><path d="M2 2l2-1.500h3.500v15l-2 1.500h-3.500z" fill="#e3e8ee" stroke="#8a93a0" stroke-width=".6"/><path d="M6 3h5v8h6v6h-11z" fill="#4a9be8"/><path d="M6 3l1.500-1.500h5l-1.500 1.500zM11 11l1.500-1.500h5l-.5 1.500z" fill="#9fd0fb"/><path d="M11 3l1.500-1.500v8l-1.500 1.500z" fill="#2f78c8"/></svg><svg style="left:694px;top:971px" width="18" height="18" viewBox="0 0 18 18"><path d="M1 12L6 3l4 0L5 12z" fill="#a9d2f7"/><path d="M1 12v2.500h4v-2.500z" fill="#4a9be8"/><path d="M5 12L10 3v2.500L5 14.5z" fill="#2f78c8"/><path d="M8 13L13 3l3 0L11 13z" fill="#8fd694"/><path d="M8 13v2.500h3v-2.500z" fill="#5cb860"/><path d="M11 13L16 3v2.500L11 15.5z" fill="#3f9a45"/><path d="M6 1.500h6v-1.500l3 2.200-3 2.200v-1.500h-6zM12 16.500h-6v1.500l-3-2.200 3-2.200v1.500h6z" fill="#5cb860"/></svg><svg style="left:728px;top:971px" width="18" height="18" viewBox="0 0 18 18"><path d="M5 3.5h9v7h-9z" fill="#4a9be8"/><path d="M5 3.5l3 -3h9l-3 3z" fill="#9fd0fb"/><path d="M14 3.5l3 -3v7l-3 3z" fill="#2f78c8"/><text x="9.500" y="9" font-size="5" font-weight="bold" font-family="Liberation Sans,sans-serif" fill="#fff" text-anchor="middle">NEW</text><rect x="1" y="11" width="12" height="6" fill="#8a93a0"/><rect x="2" y="12" width="4" height="4" fill="#e3e8ee"/><rect x="7" y="12" width="4" height="4" fill="#e3e8ee"/><path d="M11 14.500h4v-1.500l2.500 2-2.500 2v-1.500h-4z" fill="#5cb860"/></svg><svg style="left:762px;top:971px" width="18" height="18" viewBox="0 0 18 18"><path d="M1 4l3-3h13l-3 3z" fill="#9fd0fb"/><path d="M5 3.500l1.500-2h3l-1.500 2zM11 3.500l1.500-2h3l-1.500 2z" fill="#f6c544"/><rect x="1" y="4" width="13" height="4" fill="#4a9be8"/><rect x="3" y="5" width="9" height="2" fill="#f6c544"/><path d="M14 4l3-3v4l-3 3z" fill="#2f78c8"/><path d="M1 10l3-1h13l-3 1z" fill="#d4dbe4"/><rect x="1" y="10" width="13" height="2.500" fill="#c1cad6"/><rect x="1" y="13.500" width="13" height="3.500" fill="#6fb4f4"/><path d="M14 10l3-1v7l-3 1z" fill="#5f8fc4"/></svg><svg style="left:796px;top:971px" width="19" height="18" viewBox="0 0 19 18"><path d="M1 6l10-4.500 7 1v4l-10 4.500z" fill="#4a9be8"/><path d="M1 6l10-4.500 7 1-10 4.500z" fill="#9fd0fb"/><rect x="6" y="7" width="11" height="6" fill="#fff" stroke="#b5b5b5" stroke-width=".6"/><path d="M7.500 9h8M7.500 11h8" stroke="#e8543a" stroke-width="1"/><rect x="6" y="13" width="11" height="5" fill="#2f78c8"/><text x="11.500" y="17.200" font-size="4.500" font-weight="bold" font-family="Liberation Sans,sans-serif" fill="#fff" text-anchor="middle">TXT</text><path d="M1 11.500h4v-1.500l2.500 2-2.500 2v-1.500h-4z" fill="#5cb860"/></svg><svg style="left:18px;top:1001px" width="14" height="14" viewBox="0 0 14 14"><path d="M1.500 1l11 4.500-4.500 1.500 4.500 5-2 1.500-4-5-2.500 3.500z" fill="#4da3f0"/></svg><div class="t" style="left:37px;top:998px;color:#444;letter-spacing:.27px">29692.97 , 6625.74 , 0.00</div><div style="left:1099px;top:999px;width:43px;height:19px;background:#d4d4d4"></div><div style="left:1164px;top:999px;width:42px;height:19px;background:#d4d4d4"></div><div style="left:1242px;top:999px;width:24px;height:19px;background:#d4d4d4"></div><svg style="left:1101px;top:1001px" width="16" height="16" viewBox="0 0 16 16"><path d="M2.500 13.500l11-11" stroke="#333" stroke-width="1.100" fill="none"/><rect x="1" y="12" width="3" height="3" fill="#3f8fe0"/><rect x="12" y="1" width="3" height="3" fill="#3f8fe0"/></svg><svg style="left:1123px;top:1001px" width="16" height="16" viewBox="0 0 16 16"><path d="M2 14l12-12" stroke="#333" stroke-width="1.100" fill="none"/><rect x="6.500" y="6.500" width="3" height="3" fill="#3f8fe0"/></svg><svg style="left:1145px;top:1001px" width="16" height="16" viewBox="0 0 16 16"><circle cx="8" cy="8" r="6" stroke="#333" stroke-width="1.100" fill="none"/><circle cx="8" cy="8" r="1.500" fill="#3f8fe0"/></svg><svg style="left:1167px;top:1001px" width="16" height="16" viewBox="0 0 16 16"><path d="M2 2l12 12M14 2l-12 12" stroke="#333" stroke-width="1.100" fill="none"/><rect x="6.500" y="6.500" width="3" height="3" fill="#3f8fe0"/></svg><svg style="left:1189px;top:1001px" width="16" height="16" viewBox="0 0 16 16"><path d="M8 3v10M1 13h14" stroke="#333" stroke-width="1.100" fill="none"/><rect x="6.500" y="11.500" width="3" height="3" fill="#3f8fe0"/></svg><svg style="left:1211px;top:1001px" width="16" height="16" viewBox="0 0 16 16"><rect x="4" y="4" width="10" height="10" stroke="#333" stroke-width="1.100" fill="none"/><rect x="2" y="2" width="4" height="4" fill="#fff" stroke="#3f8fe0"/></svg><svg style="left:1246px;top:1001px" width="16" height="16" viewBox="0 0 16 16"><path d="M1 13h14M1 13l10-10" stroke="#333" stroke-width="1.100" fill="none" stroke-width="1.500"/><path d="M6 13a5 5 0 0 0-1.500-3.500" stroke="#3f8fe0" fill="none"/></svg><svg style="left:1281px;top:1002px" width="14" height="14" viewBox="0 0 14 14"><g fill="#3f8fe0"><rect x="1" y="1" width="2" height="2"/><rect x="1" y="5" width="2" height="2"/><rect x="1" y="9" width="2" height="2"/><rect x="5" y="1" width="2" height="2"/><rect x="5" y="5" width="2" height="2"/><rect x="5" y="9" width="2" height="2"/><rect x="9" y="1" width="2" height="2"/><rect x="9" y="5" width="2" height="2"/><rect x="9" y="9" width="2" height="2"/></g></svg><svg style="left:1314px;top:1002px" width="14" height="14" viewBox="0 0 14 14"><path d="M1 2h12l-4.500 5v5l-3-1.500v-3.500z" fill="#1f5fa8"/><path d="M2.500 2.500h9" stroke="#fff" stroke-width="1"/></svg><div class="dd" style="left:1233px;top:1007px;border-width:4px;border-top:5px solid #111;border-bottom:none"></div><div class="dd" style="left:1267px;top:1007px;border-width:4px;border-top:5px solid #111;border-bottom:none"></div><div class="dd" style="left:1300px;top:1007px;border-width:4px;border-top:5px solid #111;border-bottom:none"></div><div class="dd" style="left:1334px;top:1007px;border-width:4px;border-top:5px solid #111;border-bottom:none"></div><svg style="left:1421px;top:1000px" width="16" height="16" viewBox="0 0 16 16"><g stroke="#333" stroke-width="1.200" fill="none"><rect x="1" y="1.500" width="14" height="13.500" rx="1"/><path d="M1 4h14"/></g></svg><svg style="left:1455px;top:1000px" width="16" height="16" viewBox="0 0 16 16"><g stroke="#333" stroke-width="1.200" fill="none"><rect x="1" y="1.500" width="14" height="13.500" rx="1"/><path d="M1 4h14M8 4v11"/></g></svg><svg style="left:1489px;top:1000px" width="16" height="16" viewBox="0 0 16 16"><g stroke="#333" stroke-width="1.200" fill="none"><rect x="1" y="1.500" width="14" height="13.500" rx="1"/><path d="M1 4h14M8 4v11M8 8h7M8 11.500h7"/></g></svg><svg style="left:1523px;top:1000px" width="16" height="16" viewBox="0 0 16 16"><g stroke="#333" stroke-width="1.200" fill="none"><rect x="1" y="1.500" width="14" height="13.500" rx="1"/><path d="M1 4.500h14M1 8h14M1 11.500h14" stroke-width="1.800"/></g></svg><svg style="left:1557px;top:1000px" width="16" height="16" viewBox="0 0 16 16"><g stroke="#333" stroke-width="1.200" fill="none"><rect x="1" y="1.500" width="14" height="13.500" rx="1"/><path d="M4 7v-3h3M12 7v-3h-3M4 10v2.500h3M12 10v2.500h-3M5 5l2 2M11 5l-2 2M5 12l2-2M11 12l-2-2" stroke-width="1"/></g></svg><div style="left:1589px;top:1008px;width:7px;height:1px;background:#9a9a9a"></div><div style="left:1607px;top:1008px;width:57px;height:1px;background:#b5b5b5"></div><div style="left:1643px;top:1002px;width:4px;height:13px;background:#f1f1f1;border:1px solid #8a8a8a"></div><div style="left:1674px;top:1008px;width:8px;height:1px;background:#9a9a9a"></div><div style="left:1677.500px;top:1004.500px;width:1px;height:8px;background:#9a9a9a"></div></body></html>
